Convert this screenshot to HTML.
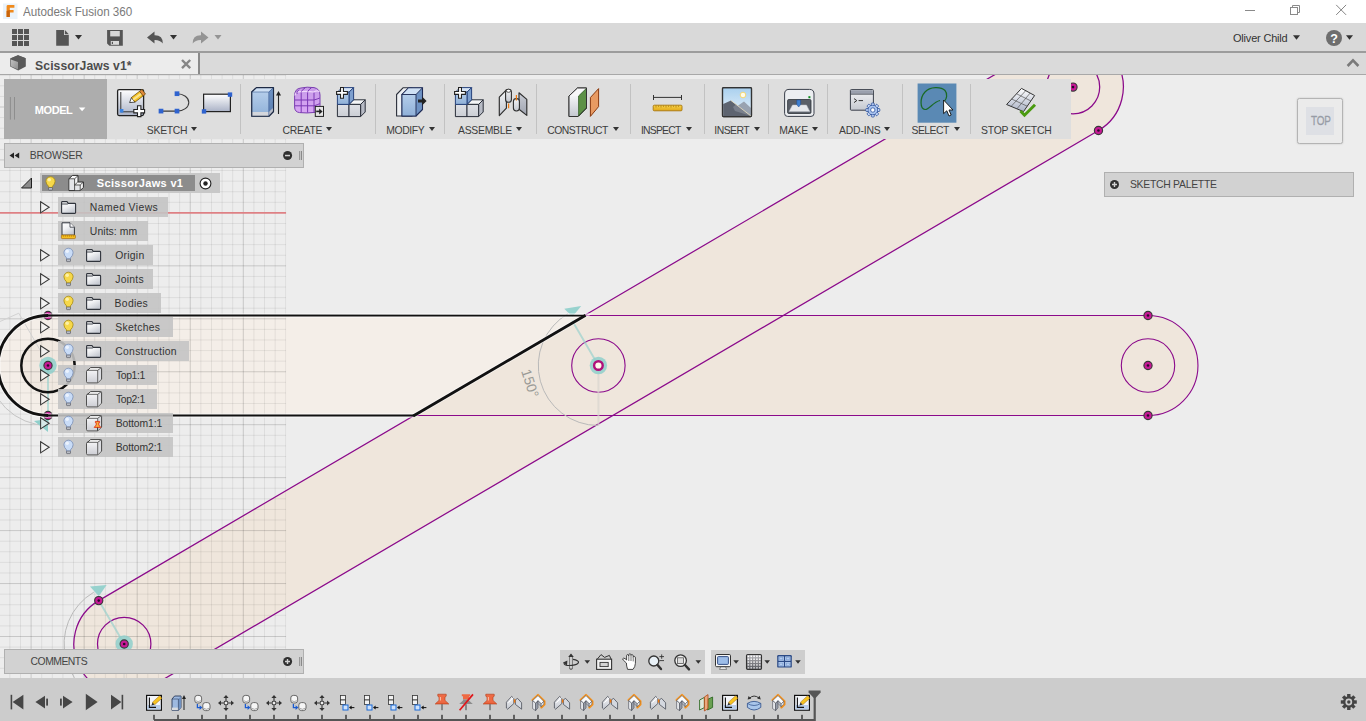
<!DOCTYPE html><html lang="en"><head><meta charset="utf-8"><title>Autodesk Fusion 360</title><style>
*{box-sizing:border-box;margin:0;padding:0}
html,body{width:1366px;height:721px;overflow:hidden;background:#ededed;font-family:"Liberation Sans",sans-serif;}
.abs{position:absolute}
#title{left:0;top:0;width:1366px;height:23px;background:#fff}
#title .t{left:23px;top:3px;font-size:13px;color:#7a7a7a;line-height:16px;white-space:nowrap}
#qat{left:0;top:23px;width:1366px;height:28px;background:#d9d9d9}
#qline{left:0;top:51px;width:1366px;height:2px;background:#9c9c9c}
#tabs{left:0;top:53px;width:1366px;height:21px;background:#dadada}
#tab{left:0;top:0;width:198px;height:21px;background:#ececec}
#tabr{left:198px;top:0;width:2px;height:21px;background:#8a8a8a}
#tabline{left:0;top:74px;width:1366px;height:1px;background:#a8a8a8}
#tab .t{left:35px;top:4px;font-size:12px;font-weight:bold;color:#4a4a4a;line-height:14px;white-space:nowrap;letter-spacing:-0.1px}
#user{left:1233px;top:8px;font-size:11px;color:#333;line-height:13px;white-space:nowrap}
#canvas{left:0;top:75px;width:1366px;height:603px;background:#ededed;overflow:hidden}
#tl{left:0;top:678px;width:1366px;height:43px;background:#cccccc}
#toolbar{left:4px;top:79px;width:1067px;height:60px;background:#dedede}
#model{left:0;top:0;width:103px;height:60px;background:#adadad}
#model .t{left:32px;top:24px;font-size:11px;font-weight:bold;color:#fff;line-height:13px;white-space:nowrap}
.lbl{top:45.3px;font-size:10.4px;color:#3c3c3c;line-height:12px;white-space:nowrap}
.sep{top:5px;width:1px;height:50px;background:#c2c2c2}
.dd{width:0;height:0;border-left:3px solid transparent;border-right:3px solid transparent;border-top:4px solid #333}
.panel{background:#d2d2d2;border:1px solid #b0b0b0;font-size:10.4px;color:#444;line-height:12px}
.row{height:19px;background:rgba(195,195,195,0.89);}
.row .t{top:3.5px;font-size:10.4px;color:#333;line-height:12px;white-space:nowrap}
.tx{white-space:nowrap}
</style></head><body>
<svg class="abs" style="left:0;top:0" width="1366" height="721" viewBox="0 0 1366 721">
<rect x="0" y="74" width="1366" height="604" fill="#ededed"/>
<defs><clipPath id="cv"><rect x="0" y="75" width="1366" height="603"/></clipPath><clipPath id="gridc"><rect x="0" y="75" width="286.3" height="603"/></clipPath><clipPath id="selc"><polygon points="-10,300 585,315.6 414,415.5 -10,430"/></clipPath></defs>
<g clip-path="url(#cv)">
<path d="M98.7,600.6 L1047.5,43.7 A50.3,50.3 0 0 1 1098.5,130.5 L149.7,687.4 A50.3,50.3 0 0 1 98.7,600.6 Z M48.0,315.5 L1148.0,315.5 A50.0,50.0 0 0 1 1148.0,415.5 L48.0,415.5 A50.0,50.0 0 0 1 48.0,315.5 Z" fill="#efe6dc" fill-rule="nonzero"/>
<g clip-path="url(#selc)"><path d="M48.0,315.5 L1148.0,315.5 A50.0,50.0 0 0 1 1148.0,415.5 L48.0,415.5 A50.0,50.0 0 0 1 48.0,315.5 Z" fill="#f4eee8"/><circle cx="48.0" cy="365.5" r="26.7" fill="#f0e8e0"/></g>
<g clip-path="url(#gridc)" shape-rendering="auto"><line x1="9.88" y1="75" x2="9.88" y2="678" stroke="#000" stroke-opacity="0.072" stroke-width="1"/><line x1="20.49" y1="75" x2="20.49" y2="678" stroke="#000" stroke-opacity="0.072" stroke-width="1"/><line x1="31.10" y1="75" x2="31.10" y2="678" stroke="#000" stroke-opacity="0.155" stroke-width="1"/><line x1="41.71" y1="75" x2="41.71" y2="678" stroke="#000" stroke-opacity="0.072" stroke-width="1"/><line x1="52.32" y1="75" x2="52.32" y2="678" stroke="#000" stroke-opacity="0.072" stroke-width="1"/><line x1="62.93" y1="75" x2="62.93" y2="678" stroke="#000" stroke-opacity="0.072" stroke-width="1"/><line x1="73.54" y1="75" x2="73.54" y2="678" stroke="#000" stroke-opacity="0.072" stroke-width="1"/><line x1="84.15" y1="75" x2="84.15" y2="678" stroke="#000" stroke-opacity="0.155" stroke-width="1"/><line x1="94.76" y1="75" x2="94.76" y2="678" stroke="#000" stroke-opacity="0.072" stroke-width="1"/><line x1="105.37" y1="75" x2="105.37" y2="678" stroke="#000" stroke-opacity="0.072" stroke-width="1"/><line x1="115.98" y1="75" x2="115.98" y2="678" stroke="#000" stroke-opacity="0.072" stroke-width="1"/><line x1="126.59" y1="75" x2="126.59" y2="678" stroke="#000" stroke-opacity="0.072" stroke-width="1"/><line x1="137.20" y1="75" x2="137.20" y2="678" stroke="#000" stroke-opacity="0.155" stroke-width="1"/><line x1="147.81" y1="75" x2="147.81" y2="678" stroke="#000" stroke-opacity="0.072" stroke-width="1"/><line x1="158.42" y1="75" x2="158.42" y2="678" stroke="#000" stroke-opacity="0.072" stroke-width="1"/><line x1="169.03" y1="75" x2="169.03" y2="678" stroke="#000" stroke-opacity="0.072" stroke-width="1"/><line x1="179.64" y1="75" x2="179.64" y2="678" stroke="#000" stroke-opacity="0.072" stroke-width="1"/><line x1="190.25" y1="75" x2="190.25" y2="678" stroke="#000" stroke-opacity="0.155" stroke-width="1"/><line x1="200.86" y1="75" x2="200.86" y2="678" stroke="#000" stroke-opacity="0.072" stroke-width="1"/><line x1="211.47" y1="75" x2="211.47" y2="678" stroke="#000" stroke-opacity="0.072" stroke-width="1"/><line x1="222.08" y1="75" x2="222.08" y2="678" stroke="#000" stroke-opacity="0.072" stroke-width="1"/><line x1="232.69" y1="75" x2="232.69" y2="678" stroke="#000" stroke-opacity="0.072" stroke-width="1"/><line x1="243.30" y1="75" x2="243.30" y2="678" stroke="#000" stroke-opacity="0.155" stroke-width="1"/><line x1="253.91" y1="75" x2="253.91" y2="678" stroke="#000" stroke-opacity="0.072" stroke-width="1"/><line x1="264.52" y1="75" x2="264.52" y2="678" stroke="#000" stroke-opacity="0.072" stroke-width="1"/><line x1="275.13" y1="75" x2="275.13" y2="678" stroke="#000" stroke-opacity="0.072" stroke-width="1"/><line x1="285.74" y1="75" x2="285.74" y2="678" stroke="#000" stroke-opacity="0.072" stroke-width="1"/><line x1="0" y1="75.23" x2="286.2" y2="75.23" stroke="#000" stroke-opacity="0.072" stroke-width="1"/><line x1="0" y1="85.82" x2="286.2" y2="85.82" stroke="#000" stroke-opacity="0.072" stroke-width="1"/><line x1="0" y1="96.41" x2="286.2" y2="96.41" stroke="#000" stroke-opacity="0.072" stroke-width="1"/><line x1="0" y1="107.00" x2="286.2" y2="107.00" stroke="#000" stroke-opacity="0.155" stroke-width="1"/><line x1="0" y1="117.59" x2="286.2" y2="117.59" stroke="#000" stroke-opacity="0.072" stroke-width="1"/><line x1="0" y1="128.18" x2="286.2" y2="128.18" stroke="#000" stroke-opacity="0.072" stroke-width="1"/><line x1="0" y1="138.77" x2="286.2" y2="138.77" stroke="#000" stroke-opacity="0.072" stroke-width="1"/><line x1="0" y1="149.36" x2="286.2" y2="149.36" stroke="#000" stroke-opacity="0.072" stroke-width="1"/><line x1="0" y1="159.95" x2="286.2" y2="159.95" stroke="#000" stroke-opacity="0.155" stroke-width="1"/><line x1="0" y1="170.54" x2="286.2" y2="170.54" stroke="#000" stroke-opacity="0.072" stroke-width="1"/><line x1="0" y1="181.13" x2="286.2" y2="181.13" stroke="#000" stroke-opacity="0.072" stroke-width="1"/><line x1="0" y1="191.72" x2="286.2" y2="191.72" stroke="#000" stroke-opacity="0.072" stroke-width="1"/><line x1="0" y1="202.31" x2="286.2" y2="202.31" stroke="#000" stroke-opacity="0.072" stroke-width="1"/><line x1="0" y1="212.90" x2="286.2" y2="212.90" stroke="#de8084" stroke-width="1.9"/><line x1="0" y1="223.49" x2="286.2" y2="223.49" stroke="#000" stroke-opacity="0.072" stroke-width="1"/><line x1="0" y1="234.08" x2="286.2" y2="234.08" stroke="#000" stroke-opacity="0.072" stroke-width="1"/><line x1="0" y1="244.67" x2="286.2" y2="244.67" stroke="#000" stroke-opacity="0.072" stroke-width="1"/><line x1="0" y1="255.26" x2="286.2" y2="255.26" stroke="#000" stroke-opacity="0.072" stroke-width="1"/><line x1="0" y1="265.85" x2="286.2" y2="265.85" stroke="#000" stroke-opacity="0.155" stroke-width="1"/><line x1="0" y1="276.44" x2="286.2" y2="276.44" stroke="#000" stroke-opacity="0.072" stroke-width="1"/><line x1="0" y1="287.03" x2="286.2" y2="287.03" stroke="#000" stroke-opacity="0.072" stroke-width="1"/><line x1="0" y1="297.62" x2="286.2" y2="297.62" stroke="#000" stroke-opacity="0.072" stroke-width="1"/><line x1="0" y1="308.21" x2="286.2" y2="308.21" stroke="#000" stroke-opacity="0.072" stroke-width="1"/><line x1="0" y1="318.80" x2="286.2" y2="318.80" stroke="#000" stroke-opacity="0.155" stroke-width="1"/><line x1="0" y1="329.39" x2="286.2" y2="329.39" stroke="#000" stroke-opacity="0.072" stroke-width="1"/><line x1="0" y1="339.98" x2="286.2" y2="339.98" stroke="#000" stroke-opacity="0.072" stroke-width="1"/><line x1="0" y1="350.57" x2="286.2" y2="350.57" stroke="#000" stroke-opacity="0.072" stroke-width="1"/><line x1="0" y1="361.16" x2="286.2" y2="361.16" stroke="#000" stroke-opacity="0.072" stroke-width="1"/><line x1="0" y1="371.75" x2="286.2" y2="371.75" stroke="#000" stroke-opacity="0.155" stroke-width="1"/><line x1="0" y1="382.34" x2="286.2" y2="382.34" stroke="#000" stroke-opacity="0.072" stroke-width="1"/><line x1="0" y1="392.93" x2="286.2" y2="392.93" stroke="#000" stroke-opacity="0.072" stroke-width="1"/><line x1="0" y1="403.52" x2="286.2" y2="403.52" stroke="#000" stroke-opacity="0.072" stroke-width="1"/><line x1="0" y1="414.11" x2="286.2" y2="414.11" stroke="#000" stroke-opacity="0.072" stroke-width="1"/><line x1="0" y1="424.70" x2="286.2" y2="424.70" stroke="#000" stroke-opacity="0.155" stroke-width="1"/><line x1="0" y1="435.29" x2="286.2" y2="435.29" stroke="#000" stroke-opacity="0.072" stroke-width="1"/><line x1="0" y1="445.88" x2="286.2" y2="445.88" stroke="#000" stroke-opacity="0.072" stroke-width="1"/><line x1="0" y1="456.47" x2="286.2" y2="456.47" stroke="#000" stroke-opacity="0.072" stroke-width="1"/><line x1="0" y1="467.06" x2="286.2" y2="467.06" stroke="#000" stroke-opacity="0.072" stroke-width="1"/><line x1="0" y1="477.65" x2="286.2" y2="477.65" stroke="#000" stroke-opacity="0.155" stroke-width="1"/><line x1="0" y1="488.24" x2="286.2" y2="488.24" stroke="#000" stroke-opacity="0.072" stroke-width="1"/><line x1="0" y1="498.83" x2="286.2" y2="498.83" stroke="#000" stroke-opacity="0.072" stroke-width="1"/><line x1="0" y1="509.42" x2="286.2" y2="509.42" stroke="#000" stroke-opacity="0.072" stroke-width="1"/><line x1="0" y1="520.01" x2="286.2" y2="520.01" stroke="#000" stroke-opacity="0.072" stroke-width="1"/><line x1="0" y1="530.60" x2="286.2" y2="530.60" stroke="#000" stroke-opacity="0.155" stroke-width="1"/><line x1="0" y1="541.19" x2="286.2" y2="541.19" stroke="#000" stroke-opacity="0.072" stroke-width="1"/><line x1="0" y1="551.78" x2="286.2" y2="551.78" stroke="#000" stroke-opacity="0.072" stroke-width="1"/><line x1="0" y1="562.37" x2="286.2" y2="562.37" stroke="#000" stroke-opacity="0.072" stroke-width="1"/><line x1="0" y1="572.96" x2="286.2" y2="572.96" stroke="#000" stroke-opacity="0.072" stroke-width="1"/><line x1="0" y1="583.55" x2="286.2" y2="583.55" stroke="#000" stroke-opacity="0.155" stroke-width="1"/><line x1="0" y1="594.14" x2="286.2" y2="594.14" stroke="#000" stroke-opacity="0.072" stroke-width="1"/><line x1="0" y1="604.73" x2="286.2" y2="604.73" stroke="#000" stroke-opacity="0.072" stroke-width="1"/><line x1="0" y1="615.32" x2="286.2" y2="615.32" stroke="#000" stroke-opacity="0.072" stroke-width="1"/><line x1="0" y1="625.91" x2="286.2" y2="625.91" stroke="#000" stroke-opacity="0.072" stroke-width="1"/><line x1="0" y1="636.50" x2="286.2" y2="636.50" stroke="#000" stroke-opacity="0.155" stroke-width="1"/><line x1="0" y1="647.09" x2="286.2" y2="647.09" stroke="#000" stroke-opacity="0.072" stroke-width="1"/><line x1="0" y1="657.68" x2="286.2" y2="657.68" stroke="#000" stroke-opacity="0.072" stroke-width="1"/><line x1="0" y1="668.27" x2="286.2" y2="668.27" stroke="#000" stroke-opacity="0.072" stroke-width="1"/></g>
<path d="M98.7,600.6 L1047.5,43.7 A50.3,50.3 0 0 1 1098.5,130.5 L149.7,687.4 A50.3,50.3 0 0 1 98.7,600.6 Z" fill="none" stroke="#8b0a8b" stroke-width="1.25"/>
<path d="M48.0,315.5 L1148.0,315.5 A50.0,50.0 0 0 1 1148.0,415.5 L48.0,415.5 A50.0,50.0 0 0 1 48.0,315.5 Z" fill="none" stroke="#8b0a8b" stroke-width="1.1"/>
<circle cx="124.2" cy="644.0" r="26.7" fill="none" stroke="#8b0a8b" stroke-width="1.25"/>
<circle cx="1073.0" cy="87.1" r="26.7" fill="none" stroke="#8b0a8b" stroke-width="1.25"/>
<circle cx="598.4" cy="365.5" r="26.7" fill="none" stroke="#8b0a8b" stroke-width="1.1"/>
<circle cx="1148.0" cy="365.5" r="26.7" fill="none" stroke="#8b0a8b" stroke-width="1.1"/>
<path d="M568.0,313.7 A60,60 0 0 0 598.4,425.5" fill="none" stroke="#b9b9b9" stroke-width="1"/><line x1="598.4" y1="365.5" x2="598.4" y2="425.5" stroke="#d8d4cf" stroke-opacity="0.7" stroke-width="2"/><line x1="598.4" y1="365.5" x2="572.1" y2="320.6" stroke="#8fcfcb" stroke-opacity="0.62" stroke-width="1.9"/>
<path d="M93.8,592.2 A60,60 0 0 0 124.2,704.0" fill="none" stroke="#b9b9b9" stroke-width="1"/><line x1="124.2" y1="644.0" x2="124.2" y2="704.0" stroke="#d8d4cf" stroke-opacity="0.7" stroke-width="2"/><line x1="124.2" y1="644.0" x2="97.9" y2="599.1" stroke="#8fcfcb" stroke-opacity="0.62" stroke-width="1.9"/>
<polygon points="564.3,308.8 581.2,306 572.4,316.8" fill="#8fcfcb" fill-opacity="0.92"/>
<polygon points="90,586.6 106.6,585 98.8,596.2" fill="#8fcfcb" fill-opacity="0.92"/>
<text x="0" y="0" transform="translate(521,371) rotate(72)" font-family="Liberation Sans, sans-serif" font-size="14" fill="#9a9a96">150°</text>
<path d="M0,306 A60,60 0 0 0 -12,365.5 A60,60 0 0 0 48,425.5" fill="none" stroke="#c4c4c4" stroke-width="1"/>
<line x1="48" y1="365.5" x2="48" y2="424" stroke="#8fcfcb" stroke-opacity="0.62" stroke-width="1.9"/>
<polygon points="34,421 48,419 48,432" fill="#8fcfcb"/>
<path d="M0,321.5 L18.8,313.2 L40,350" fill="none" stroke="#d2d2d2" stroke-width="1"/>
<circle cx="98.73825923963997" cy="600.6203992935364" r="4.1" fill="#c81896" stroke="#383838" stroke-width="1.15"/><circle cx="98.73825923963997" cy="600.6203992935364" r="1.3" fill="#2a0a2a"/>
<circle cx="1098.46174076036" cy="130.47960070646363" r="4.1" fill="#c81896" stroke="#383838" stroke-width="1.15"/><circle cx="1098.46174076036" cy="130.47960070646363" r="1.3" fill="#2a0a2a"/>
<circle cx="124.2" cy="644.0" r="8.7" fill="#8fcfcb" fill-opacity="0.85"/><circle cx="124.2" cy="644.0" r="4.1" fill="#c81896" stroke="#383838" stroke-width="1.15"/><circle cx="124.2" cy="644.0" r="1.3" fill="#2a0a2a"/>
<circle cx="1073.0" cy="87.1" r="4.1" fill="#c81896" stroke="#383838" stroke-width="1.15"/><circle cx="1073.0" cy="87.1" r="1.3" fill="#2a0a2a"/>
<circle cx="598.4" cy="365.5" r="8.7" fill="#8fcfcb" fill-opacity="0.85"/><circle cx="598.4" cy="365.5" r="4.3" fill="#fff6ea" stroke="#b0107a" stroke-width="2.4"/>
<circle cx="1148" cy="315.5" r="4.1" fill="#c81896" stroke="#383838" stroke-width="1.15"/><circle cx="1148" cy="315.5" r="1.3" fill="#2a0a2a"/>
<circle cx="1148" cy="365.5" r="4.1" fill="#c81896" stroke="#383838" stroke-width="1.15"/><circle cx="1148" cy="365.5" r="1.3" fill="#2a0a2a"/>
<circle cx="1148" cy="415.5" r="4.1" fill="#c81896" stroke="#383838" stroke-width="1.15"/><circle cx="1148" cy="415.5" r="1.3" fill="#2a0a2a"/>
<circle cx="48" cy="315.5" r="4.1" fill="#c81896" stroke="#383838" stroke-width="1.15"/><circle cx="48" cy="315.5" r="1.3" fill="#2a0a2a"/>
<circle cx="48" cy="415.5" r="4.1" fill="#c81896" stroke="#383838" stroke-width="1.15"/><circle cx="48" cy="415.5" r="1.3" fill="#2a0a2a"/>
<path d="M48.0,415.5 A50.0,50.0 0 0 1 48.0,315.5" fill="none" stroke="#fff" stroke-opacity="0.55" stroke-width="5"/><path d="M48.0,315.5 L585,315.6 L414,415.5 L48.0,415.5" fill="none" stroke="#fff" stroke-opacity="0.55" stroke-width="4.6"/><path d="M48.0,415.5 A50.0,50.0 0 0 1 48.0,315.5" fill="none" stroke="#111" stroke-width="2.8"/><path d="M47.0,315.5 L585,315.6 M414,415.5 L47.0,415.5" fill="none" stroke="#111" stroke-width="1.9"/><path d="M585.6,315.3 L413.2,415.9" fill="none" stroke="#111" stroke-width="2.9"/><circle cx="48.0" cy="365.5" r="26.7" fill="none" stroke="#111" stroke-width="2.5"/>
<circle cx="48" cy="365.5" r="8.7" fill="#8fcfcb" fill-opacity="0.85"/><circle cx="48" cy="365.5" r="4.1" fill="#c81896" stroke="#383838" stroke-width="1.15"/><circle cx="48" cy="365.5" r="1.3" fill="#2a0a2a"/>
</g></svg>
<div id="title" class="abs"></div>
<div id="qat" class="abs"></div>
<div id="qline" class="abs"></div>
<div id="tabs" class="abs"><div id="tab" class="abs"></div><div id="tabr" class="abs"></div></div>
<div id="tabline" class="abs"></div>
<div id="toolbar" class="abs"><div id="model" class="abs"></div>
<div class="abs sep" style="left:236px"></div>
<div class="abs sep" style="left:371px"></div>
<div class="abs sep" style="left:440px"></div>
<div class="abs sep" style="left:532px"></div>
<div class="abs sep" style="left:626px"></div>
<div class="abs sep" style="left:700px"></div>
<div class="abs sep" style="left:764px"></div>
<div class="abs sep" style="left:823px"></div>
<div class="abs sep" style="left:898px"></div>
<div class="abs sep" style="left:966px"></div>
<div class="abs dd" style="left:187.4px;top:48px"></div>
<div class="abs dd" style="left:322.4px;top:48px"></div>
<div class="abs dd" style="left:425.0px;top:48px"></div>
<div class="abs dd" style="left:512.0px;top:48px"></div>
<div class="abs dd" style="left:609.0px;top:48px"></div>
<div class="abs dd" style="left:682.0px;top:48px"></div>
<div class="abs dd" style="left:750.0px;top:48px"></div>
<div class="abs dd" style="left:808.0px;top:48px"></div>
<div class="abs dd" style="left:880.0px;top:48px"></div>
<div class="abs dd" style="left:950.0px;top:48px"></div>
</div>
<div class="abs panel" style="left:4px;top:143px;width:300px;height:25px"></div>
<div class="abs" style="left:40px;top:173px;width:180px;height:19.5px;background:#c8c8c8"></div>
<div class="abs" style="left:42px;top:175px;width:153px;height:15.6px;background:#8c8c8c"></div>
<div class="abs row" style="left:58px;top:197.2px;width:109.7px;height:19.4px"></div>
<div class="abs row" style="left:58px;top:221.2px;width:89.8px;height:19.4px"></div>
<div class="abs row" style="left:58px;top:245.2px;width:94.8px;height:19.4px"></div>
<div class="abs row" style="left:58px;top:269.2px;width:94.8px;height:19.4px"></div>
<div class="abs row" style="left:58px;top:293.2px;width:102.8px;height:19.4px"></div>
<div class="abs row" style="left:58px;top:317.2px;width:114.7px;height:19.4px"></div>
<div class="abs row" style="left:58px;top:341.2px;width:130.7px;height:19.4px"></div>
<div class="abs row" style="left:58px;top:365.2px;width:98.8px;height:19.4px"></div>
<div class="abs row" style="left:58px;top:389.2px;width:98.8px;height:19.4px"></div>
<div class="abs row" style="left:58px;top:413.2px;width:114.7px;height:19.4px"></div>
<div class="abs row" style="left:58px;top:437.2px;width:114.7px;height:19.4px"></div>
<div class="abs panel" style="left:4px;top:649px;width:300px;height:25px"></div>
<div class="abs panel" style="left:1104px;top:172px;width:250px;height:25px"></div>
<div class="abs" style="left:1297px;top:98px;width:46px;height:46px;background:#ebebeb;border:1px solid #b4b4b4;border-radius:2.5px;box-shadow:0 0 2px rgba(0,0,0,0.18)"></div>
<div class="abs" style="left:1305.8px;top:107px;width:28.4px;height:27.8px;background:#dee0e5"></div>
<div class="abs" style="left:560px;top:650px;width:145px;height:23.7px;background:#cecece"></div>
<div class="abs" style="left:711.3px;top:650px;width:93.8px;height:23.7px;background:#cecece"></div>
<div id="tl" class="abs"></div>
<span id="t_title" class="abs tx" style="left:23.00px;top:3.86px;font-size:12.8px;line-height:15px;letter-spacing:-0.010px;color:#7a7a7a;transform:scaleX(0.91);transform-origin:0 0">Autodesk Fusion 360</span>
<span id="t_tab" class="abs tx" style="left:35.10px;top:58.77px;font-size:12.2px;line-height:15px;letter-spacing:0.064px;font-weight:bold;color:#4c4c4c">ScissorJaws v1*</span>
<span id="t_user" class="abs tx" style="left:1232.98px;top:31.59px;font-size:11px;line-height:13px;letter-spacing:-0.196px;color:#333">Oliver Child</span>
<span id="t_model" class="abs tx" style="left:34.86px;top:103.89px;font-size:11px;line-height:13px;letter-spacing:-0.450px;font-weight:bold;color:#fff">MODEL</span>
<span id="t_browser" class="abs tx" style="left:29.72px;top:150.30px;font-size:10.4px;line-height:12px;letter-spacing:-0.090px;color:#444">BROWSER</span>
<span id="t_comments" class="abs tx" style="left:30.62px;top:656.30px;font-size:10.4px;line-height:12px;letter-spacing:-0.514px;color:#444">COMMENTS</span>
<span id="t_palette" class="abs tx" style="left:1129.90px;top:179.30px;font-size:10.4px;line-height:12px;letter-spacing:-0.263px;color:#444">SKETCH PALETTE</span>
<span id="t_top" class="abs tx" style="left:1310.98px;top:113.26px;font-size:13.4px;line-height:16px;letter-spacing:-0.270px;color:#979ca6;-webkit-text-stroke:0.3px #979ca6;transform:scaleX(0.74);transform-origin:0 0">TOP</span>
<span id="t_root" class="abs tx" style="left:96.86px;top:176.69px;font-size:11px;line-height:13px;letter-spacing:0.318px;font-weight:bold;color:#fff">ScissorJaws v1</span>
<span id="t_lbl_SKETCH" class="abs tx" style="left:146.86px;top:124.90px;font-size:10.4px;line-height:12px;letter-spacing:-0.288px;color:#3c3c3c">SKETCH</span>
<span id="t_lbl_CREATE" class="abs tx" style="left:282.62px;top:124.90px;font-size:10.4px;line-height:12px;letter-spacing:-0.324px;color:#3c3c3c">CREATE</span>
<span id="t_lbl_MODIFY" class="abs tx" style="left:386.36px;top:124.90px;font-size:10.4px;line-height:12px;letter-spacing:-0.432px;color:#3c3c3c">MODIFY</span>
<span id="t_lbl_ASSEMBLE" class="abs tx" style="left:458.00px;top:124.90px;font-size:10.4px;line-height:12px;letter-spacing:-0.257px;color:#3c3c3c">ASSEMBLE</span>
<span id="t_lbl_CONSTRUCT" class="abs tx" style="left:547.36px;top:124.90px;font-size:10.4px;line-height:12px;letter-spacing:-0.540px;color:#3c3c3c">CONSTRUCT</span>
<span id="t_lbl_INSPECT" class="abs tx" style="left:640.98px;top:124.90px;font-size:10.4px;line-height:12px;letter-spacing:-0.780px;color:#3c3c3c">INSPECT</span>
<span id="t_lbl_INSERT" class="abs tx" style="left:714.34px;top:124.90px;font-size:10.4px;line-height:12px;letter-spacing:-0.540px;color:#3c3c3c">INSERT</span>
<span id="t_lbl_MAKE" class="abs tx" style="left:779.24px;top:124.90px;font-size:10.4px;line-height:12px;letter-spacing:-0.180px;color:#3c3c3c">MAKE</span>
<span id="t_lbl_ADD-INS" class="abs tx" style="left:839.00px;top:124.90px;font-size:10.4px;line-height:12px;letter-spacing:-0.180px;color:#3c3c3c">ADD-INS</span>
<span id="t_lbl_SELECT" class="abs tx" style="left:911.60px;top:124.90px;font-size:10.4px;line-height:12px;letter-spacing:-0.540px;color:#3c3c3c">SELECT</span>
<span id="t_lbl_STOP_SKETCH" class="abs tx" style="left:981.12px;top:124.90px;font-size:10.4px;line-height:12px;letter-spacing:-0.234px;color:#3c3c3c">STOP SKETCH</span>
<span id="t_row0" class="abs tx" style="left:89.86px;top:202.40px;font-size:10.4px;line-height:12px;letter-spacing:0.396px;color:#333">Named Views</span>
<span id="t_row1" class="abs tx" style="left:89.86px;top:226.40px;font-size:10.4px;line-height:12px;letter-spacing:0.067px;color:#333">Units: mm</span>
<span id="t_row2" class="abs tx" style="left:115.24px;top:250.40px;font-size:10.4px;line-height:12px;letter-spacing:0.252px;color:#333">Origin</span>
<span id="t_row3" class="abs tx" style="left:115.24px;top:274.40px;font-size:10.4px;line-height:12px;letter-spacing:0.252px;color:#333">Joints</span>
<span id="t_row4" class="abs tx" style="left:114.62px;top:298.40px;font-size:10.4px;line-height:12px;letter-spacing:0.288px;color:#333">Bodies</span>
<span id="t_row5" class="abs tx" style="left:115.24px;top:322.40px;font-size:10.4px;line-height:12px;letter-spacing:0.283px;color:#333">Sketches</span>
<span id="t_row6" class="abs tx" style="left:115.24px;top:346.40px;font-size:10.4px;line-height:12px;letter-spacing:0.278px;color:#333">Construction</span>
<span id="t_row7" class="abs tx" style="left:116.02px;top:370.40px;font-size:10.4px;line-height:12px;letter-spacing:-0.396px;color:#333">Top1:1</span>
<span id="t_row8" class="abs tx" style="left:116.02px;top:394.40px;font-size:10.4px;line-height:12px;letter-spacing:-0.396px;color:#333">Top2:1</span>
<span id="t_row9" class="abs tx" style="left:115.74px;top:418.40px;font-size:10.4px;line-height:12px;letter-spacing:-0.090px;color:#333">Bottom1:1</span>
<span id="t_row10" class="abs tx" style="left:115.74px;top:442.40px;font-size:10.4px;line-height:12px;letter-spacing:-0.090px;color:#333">Bottom2:1</span>
<svg class="abs" style="left:0;top:0;pointer-events:none" width="1366" height="721" viewBox="0 0 1366 721">
<defs>
<linearGradient id="gW" x1="0" y1="0" x2="0" y2="1"><stop offset="0" stop-color="#ffffff"/><stop offset="1" stop-color="#aab2c6"/></linearGradient>
<linearGradient id="gB" x1="0" y1="0" x2="0" y2="1"><stop offset="0" stop-color="#b4cdea"/><stop offset="1" stop-color="#8fb0d8"/></linearGradient>
<linearGradient id="gBs" x1="0" y1="0" x2="0" y2="1"><stop offset="0" stop-color="#6f93c4"/><stop offset="1" stop-color="#5b7eb0"/></linearGradient>
<linearGradient id="gG" x1="0" y1="0" x2="0" y2="1"><stop offset="0" stop-color="#f4f5f7"/><stop offset="1" stop-color="#c4c8d0"/></linearGradient>
<linearGradient id="gGs" x1="0" y1="0" x2="0" y2="1"><stop offset="0" stop-color="#c9ccd4"/><stop offset="1" stop-color="#9fa4b0"/></linearGradient>
<linearGradient id="gP" x1="0" y1="0" x2="0" y2="1"><stop offset="0" stop-color="#c79be8"/><stop offset="1" stop-color="#d9a6f4"/></linearGradient>
<linearGradient id="gSky" x1="0" y1="0" x2="0" y2="1"><stop offset="0" stop-color="#a9d0ee"/><stop offset="1" stop-color="#e8f2fa"/></linearGradient>
<linearGradient id="gY" x1="0" y1="0" x2="0" y2="1"><stop offset="0" stop-color="#f7d34a"/><stop offset="1" stop-color="#e2a818"/></linearGradient>
<linearGradient id="gCube" x1="0" y1="0" x2="0" y2="1"><stop offset="0" stop-color="#f2f2f4"/><stop offset="1" stop-color="#cfd0d6"/></linearGradient>
<linearGradient id="gG2" x1="0" y1="0" x2="0" y2="1"><stop offset="0" stop-color="#dfe1e6"/><stop offset="1" stop-color="#cbced5"/></linearGradient>
<linearGradient id="gFold" x1="0" y1="0" x2="0.6" y2="1"><stop offset="0" stop-color="#ffffff"/><stop offset="0.45" stop-color="#f2f3f5"/><stop offset="1" stop-color="#c6cad2"/></linearGradient>
<linearGradient id="gTabCube" x1="0" y1="0" x2="1" y2="1"><stop offset="0" stop-color="#c2c2c2"/><stop offset="1" stop-color="#8e8e8e"/></linearGradient>
<linearGradient id="gGridIc" x1="0" y1="0" x2="0" y2="1"><stop offset="0" stop-color="#b8b8bc"/><stop offset="1" stop-color="#55565c"/></linearGradient>
</defs>
<rect x="3" y="3.5" width="14.5" height="15.5" fill="#eaf3fb"/>
<path d="M6.6,17 V6.2 Q6.6,5 8,5 H14.4 V7.8 H9.8 V10 H13.6 V12.6 H9.8 V17 Z" fill="#f08a1c"/><path d="M6.6,17 V11 L9.8,10 V17 Z" fill="#c8640c"/>
<path d="M1245,10.5 H1255" stroke="#8a8a8a" stroke-width="1"/>
<rect x="1290.5" y="7.5" width="7" height="7" fill="none" stroke="#8a8a8a" stroke-width="1"/><path d="M1292.5,7.5 V5.5 H1299.5 V12.5 H1297.5" fill="none" stroke="#8a8a8a" stroke-width="1"/>
<path d="M1336.2,4.9 L1346.1,14.9 M1346.1,4.9 L1336.2,14.9" stroke="#777" stroke-width="0.9"/>
<rect x="12" y="29" width="5" height="5" fill="#555"/>
<rect x="12" y="35" width="5" height="5" fill="#555"/>
<rect x="12" y="41" width="5" height="5" fill="#555"/>
<rect x="18" y="29" width="5" height="5" fill="#555"/>
<rect x="18" y="35" width="5" height="5" fill="#555"/>
<rect x="18" y="41" width="5" height="5" fill="#555"/>
<rect x="24" y="29" width="5" height="5" fill="#555"/>
<rect x="24" y="35" width="5" height="5" fill="#555"/>
<rect x="24" y="41" width="5" height="5" fill="#555"/>
<path d="M56.2,30.1 H64 V35 H68.8 V45.8 H56.2 Z" fill="#555"/><path d="M64.9,30.1 L68.8,34.2 H64.9 Z" fill="#555"/>
<polygon points="75,35 82,35 78.5,39.5" fill="#333"/>
<path d="M107.1,30.1 H122.8 V45.8 H109.4 L107.1,43.4 Z" fill="#555"/><rect x="110.2" y="31" width="9.6" height="5.4" fill="#d9d9d9"/><rect x="110.8" y="41" width="8.2" height="3.8" fill="#d9d9d9"/><rect x="111.8" y="41.8" width="1.2" height="2.2" fill="#555"/>
<path d="M147,37.5 L154.5,31.5 V35.2 Q163,35 162.8,43.5 Q160,39.8 154.5,40 V43.5 Z" fill="#555"/>
<polygon points="170,35 177,35 173.5,39.5" fill="#333"/>
<path d="M208.5,37.5 L201,31.5 V35.2 Q192.5,35 192.7,43.5 Q195.5,39.8 201,40 V43.5 Z" fill="#949494"/>
<polygon points="214.5,35 221.5,35 218,39.5" fill="#949494"/>
<polygon points="1293,35.2 1300,35.2 1296.5,39.8" fill="#333"/>
<circle cx="1334" cy="38" r="8" fill="#6e6e6e"/>
<text x="1334" y="42.6" text-anchor="middle" font-family="Liberation Sans, sans-serif" font-weight="bold" font-size="12.5" fill="#ffffff">?</text>
<polygon points="1346,35.2 1353,35.2 1349.5,39.8" fill="#333"/>
<polygon points="10.2,58.4 18,55.2 25.8,58.2 25.8,66.4 18.2,70.5 10.2,66.6" fill="#5a5a5a"/><polygon points="10.2,58.4 18,55.2 25.8,58.2 18.2,61.2" fill="#5c5c5c"/><polygon points="10.8,59.4 18,62 18,69.6 10.8,66.2" fill="url(#gTabCube)"/>
<path d="M182,60 L190.2,68.2 M190.2,60 L182,68.2" stroke="#868686" stroke-width="2.4"/>
<path d="M1347.6,66 L1353,60.4 L1358.4,66" fill="none" stroke="#7a7a7a" stroke-width="2.6"/>
<path d="M10.4,97 V119.6 M14.5,97 V119.6" stroke="#8a8a8a" stroke-width="0.9"/><polygon points="78.8,107.4 85.4,107.4 82.1,111.2" fill="#fff"/>
<rect x="117.6" y="89.6" width="26" height="26" rx="1.5" fill="url(#gW)" stroke="#222" stroke-width="1.3"/>
<path d="M120.8,92 V111.8 H134" fill="none" stroke="#333" stroke-width="1"/>
<rect x="119.8" y="109" width="3.6" height="3.6" fill="#3b82e0"/>
<g transform="translate(129.6,102.6) rotate(-37.5)"><polygon points="0,0 4.6,-2.9 4.6,2.9" fill="#fff" stroke="#333" stroke-width="0.8" stroke-linejoin="round"/><rect x="4.6" y="-2.9" width="10.2" height="5.8" fill="#f6c322" stroke="#6a4a10" stroke-width="0.7"/><rect x="4.6" y="-1.2" width="10.2" height="2.2" fill="#fbe38a"/><rect x="14.8" y="-2.9" width="3" height="5.8" fill="#e0883a" stroke="#6a4a10" stroke-width="0.7"/></g>
<path d="M137.5,105.8 h3.4 v3.7 h3.7 v3.4 h-3.7 v3.7 h-3.4 v-3.7 h-3.7 v-3.4 h3.7 Z" fill="#fff" stroke="#222" stroke-width="1.1" stroke-linejoin="miter"/>
<path d="M161,111.1 H177 A11.8,8.7 0 0 0 177,93.7" fill="none" stroke="#3a3a3a" stroke-width="1.05"/>
<rect x="158.65" y="108.75" width="4.7" height="4.7" fill="#2f63cf"/><rect x="174.65" y="108.75" width="4.7" height="4.7" fill="#2f63cf"/><rect x="174.65" y="91.35000000000001" width="4.7" height="4.7" fill="#2f63cf"/>
<rect x="203.6" y="94.2" width="26.8" height="17.4" fill="url(#gW)" stroke="#222" stroke-width="1.2"/>
<rect x="201.8" y="109.2" width="4.4" height="4.4" fill="#2f63cf"/><rect x="227.8" y="92.39999999999999" width="4.4" height="4.4" fill="#2f63cf"/>
<polygon points="251.8,92 256.5,87.6 273.5,87.6 273.5,111.5 268.8,116.3 251.8,116.3" fill="#5b7eb0" stroke="#1e2a44" stroke-width="1.1" stroke-linejoin="round"/>
<polygon points="251.8,92 256.5,87.6 273.5,87.6 268.8,92" fill="#cfe0f4"/>
<polygon points="268.8,92 273.5,87.6 273.5,111.5 268.8,116.3" fill="url(#gBs)"/>
<rect x="251.8" y="92" width="17" height="24.3" fill="url(#gB)"/>
<rect x="251.8" y="112" width="17" height="4.3" fill="#d4d7dd"/><polygon points="268.8,112 273.5,107.4 273.5,111.5 268.8,116.3" fill="#b9bdc8"/>
<polygon points="251.8,92 256.5,87.6 273.5,87.6 273.5,111.5 268.8,116.3 251.8,116.3" fill="none" stroke="#1e2a44" stroke-width="1.1" stroke-linejoin="round"/>
<path d="M268.8,92 V116.3 M268.8,92 L273.5,87.6 M251.8,92 H268.8" fill="none" stroke="#3a5a92" stroke-width="0.6"/>
<path d="M278.5,114 V93" stroke="#222" stroke-width="1.1"/><polygon points="276,95.5 278.5,91 281,95.5" fill="#222"/>
<path d="M294.6,96 Q294.6,88.4 301,88 Q307,86.6 314,87.6 Q319.8,88.6 320,95 V105.5 Q320,111 315,112.4 Q307,113.4 299.6,112.6 Q294.6,112 294.6,107 Z" fill="url(#gP)" stroke="#7a3fb0" stroke-width="1"/>
<path d="M295,95.5 Q295.5,92 300,91.6 Q308,91 313.6,92 Q318,89.6 319.4,92" fill="none" stroke="#f0d8fc" stroke-width="1.2"/>
<path d="M295,100 H314 M295,105.8 H314 M301.2,92.4 V112.6 M307.6,92.4 V112.6 M314,92.6 V112.2 M314,100 Q317.4,99 319.8,98 M314,105.8 Q317.4,104.8 319.8,103.6 M301.4,91.6 Q302.4,89.4 305,88 M307.8,91.6 Q308.8,89.4 311.4,87.8 M297,94 Q296,92 299,89.6" fill="none" stroke="#7a38b4" stroke-width="1"/>
<rect x="315.3" y="106.4" width="8.2" height="10" fill="#e6e6e6" stroke="#222" stroke-width="1"/>
<path d="M316.2,111.4 H320" stroke="#222" stroke-width="1.6"/><polygon points="319.2,108.4 322.6,111.4 319.2,114.4" fill="#222"/>
<polygon points="337.4,104.39999999999999 342.0,99.8 353.6,99.8 349.0,104.39999999999999" fill="#f2f3f5" stroke="#2a2f3a" stroke-width="1" stroke-linejoin="round"/><polygon points="349.0,104.39999999999999 353.6,99.8 353.6,112.0 349.0,116.6" fill="#b4b8c2" stroke="#2a2f3a" stroke-width="1" stroke-linejoin="round"/><rect x="337.4" y="104.39999999999999" width="11.6" height="12.2" fill="url(#gG2)" stroke="#2a2f3a" stroke-width="1" stroke-linejoin="round"/><polygon points="349.0,104.39999999999999 353.6,99.8 365.20000000000005,99.8 360.6,104.39999999999999" fill="#f4f5f7" stroke="#2a2f3a" stroke-width="1" stroke-linejoin="round"/><polygon points="360.6,104.39999999999999 365.20000000000005,99.8 365.20000000000005,112.0 360.6,116.6" fill="#b8bcc6" stroke="#2a2f3a" stroke-width="1" stroke-linejoin="round"/><rect x="349.0" y="104.39999999999999" width="11.6" height="12.2" fill="url(#gG2)" stroke="#2a2f3a" stroke-width="1" stroke-linejoin="round"/><polygon points="337.4,92.19999999999999 342.0,87.6 353.6,87.6 349.0,92.19999999999999" fill="#d6e4f5" stroke="#27437c" stroke-width="1" stroke-linejoin="round"/><polygon points="349.0,92.19999999999999 353.6,87.6 353.6,99.8 349.0,104.39999999999999" fill="#7d9fce" stroke="#27437c" stroke-width="1" stroke-linejoin="round"/><rect x="337.4" y="92.19999999999999" width="11.6" height="12.2" fill="url(#gB)" stroke="#27437c" stroke-width="1" stroke-linejoin="round"/><path d="M340.55,87.5 h2.9 v3.95 h3.95 v2.9 h-3.95 v3.95 h-2.9 v-3.95 h-3.95 v-2.9 h3.95 Z" fill="#fff" stroke="#222" stroke-width="1.1" stroke-linejoin="miter"/>
<polygon points="396.6,94.5 403,87.8 412,87.8 412,116 396.6,116" fill="#eef0f3" stroke="#2a2f3a" stroke-width="1.1" stroke-linejoin="round"/>
<polygon points="402,94.5 408.5,87.8 422.5,87.8 422.5,109.5 416,116 402,116" fill="#6f93c4" stroke="#1e2a55" stroke-width="1.1" stroke-linejoin="round"/>
<rect x="402" y="94.5" width="14" height="21.5" fill="url(#gB)" stroke="#1e2a55" stroke-width="0.9"/>
<polygon points="402,94.5 408.5,87.8 422.5,87.8 416,94.5" fill="#cfe0f4" stroke="#1e2a55" stroke-width="0.9" stroke-linejoin="round"/>
<path d="M418,101 H423" stroke="#222" stroke-width="3"/><polygon points="422,96.6 426.6,101 422,105.4" fill="#222"/>
<polygon points="455.4,104.39999999999999 460.0,99.8 471.6,99.8 467.0,104.39999999999999" fill="#f2f3f5" stroke="#2a2f3a" stroke-width="1" stroke-linejoin="round"/><polygon points="467.0,104.39999999999999 471.6,99.8 471.6,112.0 467.0,116.6" fill="#b4b8c2" stroke="#2a2f3a" stroke-width="1" stroke-linejoin="round"/><rect x="455.4" y="104.39999999999999" width="11.6" height="12.2" fill="url(#gG2)" stroke="#2a2f3a" stroke-width="1" stroke-linejoin="round"/><polygon points="467.0,104.39999999999999 471.6,99.8 483.20000000000005,99.8 478.6,104.39999999999999" fill="#f4f5f7" stroke="#2a2f3a" stroke-width="1" stroke-linejoin="round"/><polygon points="478.6,104.39999999999999 483.20000000000005,99.8 483.20000000000005,112.0 478.6,116.6" fill="#b8bcc6" stroke="#2a2f3a" stroke-width="1" stroke-linejoin="round"/><rect x="467.0" y="104.39999999999999" width="11.6" height="12.2" fill="url(#gG2)" stroke="#2a2f3a" stroke-width="1" stroke-linejoin="round"/><polygon points="455.4,92.19999999999999 460.0,87.6 471.6,87.6 467.0,92.19999999999999" fill="#d6e4f5" stroke="#27437c" stroke-width="1" stroke-linejoin="round"/><polygon points="467.0,92.19999999999999 471.6,87.6 471.6,99.8 467.0,104.39999999999999" fill="#7d9fce" stroke="#27437c" stroke-width="1" stroke-linejoin="round"/><rect x="455.4" y="92.19999999999999" width="11.6" height="12.2" fill="url(#gB)" stroke="#27437c" stroke-width="1" stroke-linejoin="round"/><path d="M458.55,87.5 h2.9 v3.95 h3.95 v2.9 h-3.95 v3.95 h-2.9 v-3.95 h-3.95 v-2.9 h3.95 Z" fill="#fff" stroke="#222" stroke-width="1.1" stroke-linejoin="miter"/>
<polygon points="499.3,97.2 506.4,89.8 506.4,108.2 499.3,115.6" fill="url(#gG)" stroke="#2e2e2e" stroke-width="1.15" stroke-linejoin="round"/>
<rect x="505.6" y="89.2" width="5.8" height="13" rx="2.8" fill="url(#gG)" stroke="#2e2e2e" stroke-width="1.1"/><ellipse cx="508.5" cy="90.8" rx="2.2" ry="1.5" fill="#fff" stroke="#2e2e2e" stroke-width="0.8"/>
<polygon points="519,92.8 526.8,99.4 526.8,115.4 519,109.2" fill="url(#gGs)" stroke="#2e2e2e" stroke-width="1.15" stroke-linejoin="round"/>
<rect x="513.4" y="98.6" width="6" height="12.4" rx="2.9" fill="url(#gG)" stroke="#2e2e2e" stroke-width="1.1"/>
<path d="M508.6,103.4 V108.2 M516.4,95 V100.4" stroke="#f07a10" stroke-width="1.2"/>
<polygon points="569,96 577.5,88 586.5,88 586.5,108 578,116.5 569,116.5" fill="#e9ebee" stroke="#333" stroke-width="1" stroke-linejoin="round"/>
<polygon points="569,96 577.5,88 586.5,88 578,96" fill="#f8f8f9"/><rect x="569" y="96" width="9" height="20.5" fill="url(#gG)"/>
<polygon points="578.6,96 586.5,88.3 586.5,108 578.6,116.2" fill="#5d9146" stroke="#2f5a25" stroke-width="0.8" stroke-linejoin="round"/>
<polygon points="569,96 577.5,88 586.5,88 586.5,108 578,116.5 569,116.5" fill="none" stroke="#333" stroke-width="1" stroke-linejoin="round"/>
<polygon points="590.4,97.5 598.6,88.6 598.6,106.6 590.4,116.4" fill="#e89a62" stroke="#8a3a10" stroke-width="1" stroke-linejoin="round"/>
<path d="M653.5,97.4 H681.5 M653.5,95 V100 M681.5,95 V100" stroke="#333" stroke-width="1" fill="none"/>
<rect x="653.2" y="105.2" width="28.8" height="5.6" rx="1" fill="url(#gY)" stroke="#a8760c" stroke-width="0.9"/>
<path d="M656,105.5 v2 M658.5,105.5 v1.4 M661,105.5 v2 M663.5,105.5 v1.4 M666,105.5 v2 M668.5,105.5 v1.4 M671,105.5 v2 M673.5,105.5 v1.4 M676,105.5 v2 M678.5,105.5 v1.4" stroke="#a8760c" stroke-width="0.7"/>
<rect x="722.5" y="87.6" width="29" height="29" rx="1" fill="url(#gSky)" stroke="#333" stroke-width="1.2"/>
<polygon points="736,107 744,101.5 751,108 751,116 736,116" fill="#98a2b0"/>
<polygon points="723.2,104 731,100.5 751,116 723.2,116" fill="#5e6470"/><polygon points="731,100.5 736,104.5 733,107 735,111 751,116" fill="#7a808c"/>
<path d="M731,100.5 L751,116" stroke="#f3e9c8" stroke-width="0.8"/>
<circle cx="743" cy="95" r="2.8" fill="#fffbe8" stroke="#f3d774" stroke-width="1"/>
<rect x="722.5" y="87.6" width="29" height="29" rx="1" fill="none" stroke="#333" stroke-width="1.2"/>
<path d="M784.6,94 Q784.6,89.4 789,89.4 H809.5 Q814,89.4 814,94 V113.5 Q814,116.4 811,116.4 H787.6 Q784.6,116.4 784.6,113.5 Z" fill="#eceef1" stroke="#3a3f4a" stroke-width="1"/>
<rect x="787.6" y="99.5" width="23.4" height="14" rx="1.2" fill="#5a5f68" stroke="#2f333a" stroke-width="0.8"/>
<polygon points="792.5,105 806.5,105 809.8,111.5 789,111.5" fill="#e6e8ec" stroke="#b8bcc4" stroke-width="0.5"/>
<polygon points="796.8,100 800.6,100 800.6,104.5 798.7,107 796.8,104.5" fill="#3f7fd0" stroke="#1e4a90" stroke-width="0.5"/>
<rect x="808.4" y="96.2" width="2" height="2" fill="#0a8a1a"/>
<rect x="850.4" y="89.6" width="23" height="20.6" rx="0.8" fill="url(#gG)" stroke="#3a3f4a" stroke-width="1"/>
<rect x="851" y="90.2" width="21.8" height="3.6" fill="#9aa0ae"/><path d="M850.4,94.2 H873.4" stroke="#3a3f4a" stroke-width="0.8"/>
<path d="M854,98.6 L856.8,100.6 L854,102.6 M858.6,100.6 H863" fill="none" stroke="#333" stroke-width="1"/>
<g transform="translate(872.8,110)"><rect x="-1.5" y="-7" width="3" height="4" rx="0.8" fill="#c4d6f6" stroke="#2a4f9c" stroke-width="0.8" transform="rotate(0)"/><rect x="-1.5" y="-7" width="3" height="4" rx="0.8" fill="#c4d6f6" stroke="#2a4f9c" stroke-width="0.8" transform="rotate(45)"/><rect x="-1.5" y="-7" width="3" height="4" rx="0.8" fill="#c4d6f6" stroke="#2a4f9c" stroke-width="0.8" transform="rotate(90)"/><rect x="-1.5" y="-7" width="3" height="4" rx="0.8" fill="#c4d6f6" stroke="#2a4f9c" stroke-width="0.8" transform="rotate(135)"/><rect x="-1.5" y="-7" width="3" height="4" rx="0.8" fill="#c4d6f6" stroke="#2a4f9c" stroke-width="0.8" transform="rotate(180)"/><rect x="-1.5" y="-7" width="3" height="4" rx="0.8" fill="#c4d6f6" stroke="#2a4f9c" stroke-width="0.8" transform="rotate(225)"/><rect x="-1.5" y="-7" width="3" height="4" rx="0.8" fill="#c4d6f6" stroke="#2a4f9c" stroke-width="0.8" transform="rotate(270)"/><rect x="-1.5" y="-7" width="3" height="4" rx="0.8" fill="#c4d6f6" stroke="#2a4f9c" stroke-width="0.8" transform="rotate(315)"/><circle r="4.7" fill="#c4d6f6" stroke="#2a4f9c" stroke-width="0.8"/><circle r="4.1" fill="#a9c4f0"/><circle r="2.2" fill="#fff" stroke="#2a4f9c" stroke-width="0.8"/></g>
<rect x="917.6" y="83.5" width="38.8" height="39.2" fill="#5a89b4"/>
<path d="M940,100.5 C933,102 929,110 925,109.5 C920,109 919.5,98 925,92 C930,86.5 941,86.5 945,90.5 C948,94 946.5,99 944.5,101" fill="none" stroke="#1a6a24" stroke-width="1.2"/>
<polygon points="943.6,100 943.6,113.6 946.8,110.8 949,116 951.2,115 949,110 953,110" fill="#fff" stroke="#111" stroke-width="0.9" stroke-linejoin="round"/>
<polygon points="1006.6,104.5 1021.5,88.4 1034.6,95.5 1023.5,111.6" fill="url(#gW)" stroke="#333" stroke-width="1" stroke-linejoin="round"/>
<path d="M1011.6,99 L1027.2,106.2 M1016.6,93.8 L1031,101 M1011,106.5 L1025.8,90.6 M1016.8,109 L1030.2,93" stroke="#555" stroke-width="0.7" fill="none"/>
<path d="M1020.5,111 L1024.5,115.2 L1035,104.8" fill="none" stroke="#4a9a10" stroke-width="3"/>
<polygon points="9.5,155.5 14,152.6 14,158.4" fill="#222"/><polygon points="14.6,155.5 19.2,152.6 19.2,158.4" fill="#222"/>
<circle cx="287.6" cy="155.5" r="4.5" fill="#303030"/><rect x="285" y="154.8" width="5" height="1.5" fill="#d2d2d2"/>
<path d="M299.7,151 V160 M301.5,151 V160" stroke="#777" stroke-width="0.8"/>
<polygon points="21.5,188 31.5,188 31.5,178" fill="#8a8a8a" stroke="#222" stroke-width="1"/>
<path d="M45.9,181.3 A4.6,4.6 0 1 1 55.1,181.3 Q54.800000000000004,184.3 52.5,186.3 V187.70000000000002 H48.5 V186.3 Q46.199999999999996,184.3 45.9,181.3 Z" fill="#f6d84a" stroke="#a88a10" stroke-width="0.8"/><circle cx="49.2" cy="179.8" r="1.8" fill="#fdf3b0" opacity="0.9"/><rect x="48.5" y="187.5" width="4" height="2.6" rx="0.6" fill="#b8bcc6" stroke="#4a4e58" stroke-width="0.6"/>
<path d="M69,178.8 L72.4,175.4 H78 V182 H83.4 V187.4 L80.2,190.6 H69 Z" fill="#f6f6f7" stroke="#2e2e2e" stroke-width="1" stroke-linejoin="round"/><rect x="69.6" y="179.2" width="4.8" height="10.8" fill="#e4e5e9"/><rect x="74.8" y="185.6" width="5" height="4.6" fill="#e4e5e9"/><path d="M69,178.8 H74.6 V190.4 M74.6,178.8 L78,175.6 M74.6,185 H80.2 V190.4 M80.2,185 L83.2,182.2 M74.6,185 L77.8,182" fill="none" stroke="#2e2e2e" stroke-width="0.8"/>
<circle cx="205.5" cy="183.5" r="5.4" fill="#fff" stroke="#222" stroke-width="1.1"/><circle cx="205.5" cy="183.5" r="2.2" fill="#222"/>
<polygon points="40.6,201.70000000000002 49.2,207.3 40.6,212.9" fill="#f4f4f4" fill-opacity="0.7" stroke="#383838" stroke-width="1.05" stroke-linejoin="miter"/>
<path d="M61.6,202.4 Q61.6,201.60000000000002 62.4,201.60000000000002 H67 L68.2,203.4 H74.8 Q75.6,203.4 75.6,204.20000000000002 V212.60000000000002 Q75.6,213.4 74.8,213.4 H62.4 Q61.6,213.4 61.6,212.60000000000002 Z" fill="url(#gFold)" stroke="#30343c" stroke-width="1.1" stroke-linejoin="round"/><path d="M61.8,204.0 H67.8" stroke="#30343c" stroke-width="0.9"/>
<path d="M62,222.8 H70 L74.4,227.2 V235.2 H62 Z" fill="url(#gFold)" stroke="#30343c" stroke-width="1" stroke-linejoin="round"/><path d="M70,222.8 V227.2 H74.4" fill="#fff" stroke="#30343c" stroke-width="0.8"/><rect x="61.4" y="235" width="14" height="3.6" rx="0.8" fill="#f6c020" stroke="#a86c08" stroke-width="0.7"/><path d="M63.4,235.2 v1.6 M65.4,235.2 v1.6 M67.4,235.2 v1.6 M69.4,235.2 v1.6 M71.4,235.2 v1.6 M73.4,235.2 v1.6" stroke="#a86c08" stroke-width="0.6"/>
<polygon points="40.6,249.70000000000002 49.2,255.3 40.6,260.90000000000003" fill="#f4f4f4" fill-opacity="0.7" stroke="#383838" stroke-width="1.05" stroke-linejoin="miter"/>
<path d="M63.9,252.8 A4.6,4.6 0 1 1 73.1,252.8 Q72.8,255.8 70.5,257.8 V259.2 H66.5 V257.8 Q64.2,255.8 63.9,252.8 Z" fill="#c9dcf7" stroke="#7a8fb8" stroke-width="0.8"/><circle cx="67.2" cy="251.3" r="1.8" fill="#eef4fd" opacity="0.9"/><rect x="66.5" y="259.0" width="4" height="2.6" rx="0.6" fill="#b8bcc6" stroke="#4a4e58" stroke-width="0.6"/>
<path d="M86.6,250.4 Q86.6,249.60000000000002 87.4,249.60000000000002 H92 L93.2,251.4 H99.8 Q100.6,251.4 100.6,252.20000000000002 V260.6 Q100.6,261.40000000000003 99.8,261.40000000000003 H87.4 Q86.6,261.40000000000003 86.6,260.6 Z" fill="url(#gFold)" stroke="#30343c" stroke-width="1.1" stroke-linejoin="round"/><path d="M86.8,252.0 H92.8" stroke="#30343c" stroke-width="0.9"/>
<polygon points="40.6,273.7 49.2,279.3 40.6,284.90000000000003" fill="#f4f4f4" fill-opacity="0.7" stroke="#383838" stroke-width="1.05" stroke-linejoin="miter"/>
<path d="M63.9,276.8 A4.6,4.6 0 1 1 73.1,276.8 Q72.8,279.8 70.5,281.8 V283.2 H66.5 V281.8 Q64.2,279.8 63.9,276.8 Z" fill="#f6d84a" stroke="#a88a10" stroke-width="0.8"/><circle cx="67.2" cy="275.3" r="1.8" fill="#fdf3b0" opacity="0.9"/><rect x="66.5" y="283.0" width="4" height="2.6" rx="0.6" fill="#b8bcc6" stroke="#4a4e58" stroke-width="0.6"/>
<path d="M86.6,274.40000000000003 Q86.6,273.6 87.4,273.6 H92 L93.2,275.40000000000003 H99.8 Q100.6,275.40000000000003 100.6,276.2 V284.6 Q100.6,285.40000000000003 99.8,285.40000000000003 H87.4 Q86.6,285.40000000000003 86.6,284.6 Z" fill="url(#gFold)" stroke="#30343c" stroke-width="1.1" stroke-linejoin="round"/><path d="M86.8,276.0 H92.8" stroke="#30343c" stroke-width="0.9"/>
<polygon points="40.6,297.7 49.2,303.3 40.6,308.90000000000003" fill="#f4f4f4" fill-opacity="0.7" stroke="#383838" stroke-width="1.05" stroke-linejoin="miter"/>
<path d="M63.9,300.8 A4.6,4.6 0 1 1 73.1,300.8 Q72.8,303.8 70.5,305.8 V307.2 H66.5 V305.8 Q64.2,303.8 63.9,300.8 Z" fill="#f6d84a" stroke="#a88a10" stroke-width="0.8"/><circle cx="67.2" cy="299.3" r="1.8" fill="#fdf3b0" opacity="0.9"/><rect x="66.5" y="307.0" width="4" height="2.6" rx="0.6" fill="#b8bcc6" stroke="#4a4e58" stroke-width="0.6"/>
<path d="M86.6,298.40000000000003 Q86.6,297.6 87.4,297.6 H92 L93.2,299.40000000000003 H99.8 Q100.6,299.40000000000003 100.6,300.2 V308.6 Q100.6,309.40000000000003 99.8,309.40000000000003 H87.4 Q86.6,309.40000000000003 86.6,308.6 Z" fill="url(#gFold)" stroke="#30343c" stroke-width="1.1" stroke-linejoin="round"/><path d="M86.8,300.0 H92.8" stroke="#30343c" stroke-width="0.9"/>
<polygon points="40.6,321.7 49.2,327.3 40.6,332.90000000000003" fill="#f4f4f4" fill-opacity="0.7" stroke="#383838" stroke-width="1.05" stroke-linejoin="miter"/>
<path d="M63.9,324.8 A4.6,4.6 0 1 1 73.1,324.8 Q72.8,327.8 70.5,329.8 V331.2 H66.5 V329.8 Q64.2,327.8 63.9,324.8 Z" fill="#f6d84a" stroke="#a88a10" stroke-width="0.8"/><circle cx="67.2" cy="323.3" r="1.8" fill="#fdf3b0" opacity="0.9"/><rect x="66.5" y="331.0" width="4" height="2.6" rx="0.6" fill="#b8bcc6" stroke="#4a4e58" stroke-width="0.6"/>
<path d="M86.6,322.40000000000003 Q86.6,321.6 87.4,321.6 H92 L93.2,323.40000000000003 H99.8 Q100.6,323.40000000000003 100.6,324.2 V332.6 Q100.6,333.40000000000003 99.8,333.40000000000003 H87.4 Q86.6,333.40000000000003 86.6,332.6 Z" fill="url(#gFold)" stroke="#30343c" stroke-width="1.1" stroke-linejoin="round"/><path d="M86.8,324.0 H92.8" stroke="#30343c" stroke-width="0.9"/>
<polygon points="40.6,345.7 49.2,351.3 40.6,356.90000000000003" fill="#f4f4f4" fill-opacity="0.7" stroke="#383838" stroke-width="1.05" stroke-linejoin="miter"/>
<path d="M63.9,348.8 A4.6,4.6 0 1 1 73.1,348.8 Q72.8,351.8 70.5,353.8 V355.2 H66.5 V353.8 Q64.2,351.8 63.9,348.8 Z" fill="#c9dcf7" stroke="#7a8fb8" stroke-width="0.8"/><circle cx="67.2" cy="347.3" r="1.8" fill="#eef4fd" opacity="0.9"/><rect x="66.5" y="355.0" width="4" height="2.6" rx="0.6" fill="#b8bcc6" stroke="#4a4e58" stroke-width="0.6"/>
<path d="M86.6,346.40000000000003 Q86.6,345.6 87.4,345.6 H92 L93.2,347.40000000000003 H99.8 Q100.6,347.40000000000003 100.6,348.2 V356.6 Q100.6,357.40000000000003 99.8,357.40000000000003 H87.4 Q86.6,357.40000000000003 86.6,356.6 Z" fill="url(#gFold)" stroke="#30343c" stroke-width="1.1" stroke-linejoin="round"/><path d="M86.8,348.0 H92.8" stroke="#30343c" stroke-width="0.9"/>
<polygon points="40.6,369.7 49.2,375.3 40.6,380.90000000000003" fill="#f4f4f4" fill-opacity="0.7" stroke="#383838" stroke-width="1.05" stroke-linejoin="miter"/>
<path d="M63.9,372.8 A4.6,4.6 0 1 1 73.1,372.8 Q72.8,375.8 70.5,377.8 V379.2 H66.5 V377.8 Q64.2,375.8 63.9,372.8 Z" fill="#c9dcf7" stroke="#7a8fb8" stroke-width="0.8"/><circle cx="67.2" cy="371.3" r="1.8" fill="#eef4fd" opacity="0.9"/><rect x="66.5" y="379.0" width="4" height="2.6" rx="0.6" fill="#b8bcc6" stroke="#4a4e58" stroke-width="0.6"/>
<path d="M86.6,371.4 Q86.6,370.2 87.8,370.1 L90.6,367.6 H100.6 Q101.6,367.6 101.6,368.6 V379 L97.8,382.8 H87.8 Q86.6,382.8 86.6,381.6 Z" fill="#fbfbfb" stroke="#3a3a3a" stroke-width="0.95" stroke-linejoin="round"/><rect x="87.2" y="370.8" width="10.2" height="11.4" fill="url(#gCube)"/><polygon points="98,370.6 101,368.2 101,378.8 98,382" fill="#dcdde1"/><path d="M87,370.3 H97.7 V382.4 M97.7,370.3 L101.2,367.8" fill="none" stroke="#3a3a3a" stroke-width="0.8"/>
<polygon points="40.6,393.7 49.2,399.3 40.6,404.90000000000003" fill="#f4f4f4" fill-opacity="0.7" stroke="#383838" stroke-width="1.05" stroke-linejoin="miter"/>
<path d="M63.9,396.8 A4.6,4.6 0 1 1 73.1,396.8 Q72.8,399.8 70.5,401.8 V403.2 H66.5 V401.8 Q64.2,399.8 63.9,396.8 Z" fill="#c9dcf7" stroke="#7a8fb8" stroke-width="0.8"/><circle cx="67.2" cy="395.3" r="1.8" fill="#eef4fd" opacity="0.9"/><rect x="66.5" y="403.0" width="4" height="2.6" rx="0.6" fill="#b8bcc6" stroke="#4a4e58" stroke-width="0.6"/>
<path d="M86.6,395.4 Q86.6,394.2 87.8,394.1 L90.6,391.6 H100.6 Q101.6,391.6 101.6,392.6 V403 L97.8,406.8 H87.8 Q86.6,406.8 86.6,405.6 Z" fill="#fbfbfb" stroke="#3a3a3a" stroke-width="0.95" stroke-linejoin="round"/><rect x="87.2" y="394.8" width="10.2" height="11.4" fill="url(#gCube)"/><polygon points="98,394.6 101,392.2 101,402.8 98,406" fill="#dcdde1"/><path d="M87,394.3 H97.7 V406.4 M97.7,394.3 L101.2,391.8" fill="none" stroke="#3a3a3a" stroke-width="0.8"/>
<polygon points="40.6,417.7 49.2,423.3 40.6,428.90000000000003" fill="#f4f4f4" fill-opacity="0.7" stroke="#383838" stroke-width="1.05" stroke-linejoin="miter"/>
<path d="M63.9,420.8 A4.6,4.6 0 1 1 73.1,420.8 Q72.8,423.8 70.5,425.8 V427.2 H66.5 V425.8 Q64.2,423.8 63.9,420.8 Z" fill="#c9dcf7" stroke="#7a8fb8" stroke-width="0.8"/><circle cx="67.2" cy="419.3" r="1.8" fill="#eef4fd" opacity="0.9"/><rect x="66.5" y="427.0" width="4" height="2.6" rx="0.6" fill="#b8bcc6" stroke="#4a4e58" stroke-width="0.6"/>
<path d="M86.6,419.4 Q86.6,418.2 87.8,418.1 L90.6,415.6 H100.6 Q101.6,415.6 101.6,416.6 V427 L97.8,430.8 H87.8 Q86.6,430.8 86.6,429.6 Z" fill="#fbfbfb" stroke="#3a3a3a" stroke-width="0.95" stroke-linejoin="round"/><rect x="87.2" y="418.8" width="10.2" height="11.4" fill="url(#gCube)"/><polygon points="98,418.6 101,416.2 101,426.8 98,430" fill="#dcdde1"/><path d="M87,418.3 H97.7 V430.4 M97.7,418.3 L101.2,415.8" fill="none" stroke="#3a3a3a" stroke-width="0.8"/><path d="M95.4,421.4 H99.6 V422.6 H98.8 V425 L100.8,427.4 H94.2 L96.2,425 V422.6 H95.4 Z" fill="#fbb040" stroke="#e0280a" stroke-width="0.85" stroke-linejoin="round"/><path d="M97.5,427.6 V430.6" stroke="#3a3a3a" stroke-width="0.9"/>
<polygon points="40.6,441.7 49.2,447.3 40.6,452.90000000000003" fill="#f4f4f4" fill-opacity="0.7" stroke="#383838" stroke-width="1.05" stroke-linejoin="miter"/>
<path d="M63.9,444.8 A4.6,4.6 0 1 1 73.1,444.8 Q72.8,447.8 70.5,449.8 V451.2 H66.5 V449.8 Q64.2,447.8 63.9,444.8 Z" fill="#c9dcf7" stroke="#7a8fb8" stroke-width="0.8"/><circle cx="67.2" cy="443.3" r="1.8" fill="#eef4fd" opacity="0.9"/><rect x="66.5" y="451.0" width="4" height="2.6" rx="0.6" fill="#b8bcc6" stroke="#4a4e58" stroke-width="0.6"/>
<path d="M86.6,443.4 Q86.6,442.2 87.8,442.1 L90.6,439.6 H100.6 Q101.6,439.6 101.6,440.6 V451 L97.8,454.8 H87.8 Q86.6,454.8 86.6,453.6 Z" fill="#fbfbfb" stroke="#3a3a3a" stroke-width="0.95" stroke-linejoin="round"/><rect x="87.2" y="442.8" width="10.2" height="11.4" fill="url(#gCube)"/><polygon points="98,442.6 101,440.2 101,450.8 98,454" fill="#dcdde1"/><path d="M87,442.3 H97.7 V454.4 M97.7,442.3 L101.2,439.8" fill="none" stroke="#3a3a3a" stroke-width="0.8"/>
<circle cx="287.6" cy="661.5" r="4.5" fill="#303030"/><path d="M285,661.5 H290 M287.5,659 V664" stroke="#d2d2d2" stroke-width="1.4"/>
<path d="M299.7,657 V666 M301.5,657 V666" stroke="#777" stroke-width="0.8"/>
<circle cx="1114.5" cy="184.5" r="4.5" fill="#303030"/><path d="M1112,184.5 H1117 M1114.5,182 V187" stroke="#d2d2d2" stroke-width="1.4"/>
<path d="M571,654.5 V669.5" stroke="#333" stroke-width="1.1"/><path d="M569.8,656 H572.2 V669 H569.8 Z" fill="#fff" stroke="#333" stroke-width="0.8"/><polygon points="568.2,657 571,653.4 573.8,657" fill="#333"/>
<path d="M573,659.4 C581,660.5 580,664.5 572,665.4 C566,666 563.5,664.5 564.2,662.8" fill="none" stroke="#333" stroke-width="1.1"/><polygon points="563,662.6 567.4,660.4 567,665.6" fill="#333"/>
<polygon points="584.5,660.2 590.1,660.2 587.3,663.8000000000001" fill="#333"/>
<rect x="596.6" y="659.2" width="15" height="10.2" fill="#f2f2f2" stroke="#333" stroke-width="1.1"/><rect x="600" y="662.4" width="8.2" height="4.2" fill="#d4d4d4" stroke="#333" stroke-width="0.9"/><path d="M597.4,659 L601,654.6 L604.6,657.4 L609.4,655.4 L611,659" fill="none" stroke="#333" stroke-width="1"/>
<path d="M626.4,663 L623.2,660 Q622,658.6 623.4,658.2 Q625,658 626.6,660 V655.6 Q626.8,654.4 627.8,654.6 Q628.6,654.8 628.8,656 V654.8 Q629,653.6 630,653.8 Q631,654 631,655 V655.4 Q631.2,654.4 632.2,654.6 Q633.2,654.8 633.2,656 V657.2 Q633.6,656 634.6,656.4 Q635.4,656.8 635.4,658 V663.4 Q635.2,667 633,669.4 H627.6 Q626.4,666 626.4,663 Z" fill="#fff" stroke="#333" stroke-width="0.9" stroke-linejoin="round"/><path d="M628.8,656 V661 M631,655.4 V661 M633.2,657.2 V661.4" stroke="#333" stroke-width="0.7"/>
<circle cx="653.8" cy="661" r="5" fill="#e8f0f6" stroke="#333" stroke-width="1.3"/><path d="M657.6,665 L661,669" stroke="#333" stroke-width="2.4" stroke-linecap="round"/><path d="M659.4,656.6 H664 M661.7,654.4 V658.8 M659.4,660.6 H664" stroke="#333" stroke-width="0.9"/>
<circle cx="680.6" cy="660.6" r="5.8" fill="#f2f2f2" stroke="#333" stroke-width="1.3"/><rect x="677.6" y="657.8" width="6" height="5.6" fill="#ddd" stroke="#555" stroke-width="0.8"/><path d="M685,665 L689,669.4" stroke="#333" stroke-width="2.4" stroke-linecap="round"/>
<polygon points="695.5,660.2 701.1,660.2 698.3,663.8000000000001" fill="#333"/>
<rect x="715.5" y="654.5" width="15" height="12.2" rx="1.2" fill="#f6f6f6" stroke="#333" stroke-width="1"/><rect x="717.6" y="656.6" width="10.8" height="7.8" rx="0.8" fill="#9dbde8" stroke="#27437c" stroke-width="0.9"/><path d="M720.6,667 L719.6,669.4 H726.6 L725.6,667 Z" fill="#f4f4f4" stroke="#444" stroke-width="0.6"/>
<polygon points="733.3,660.2 738.9,660.2 736.0999999999999,663.8000000000001" fill="#333"/>
<rect x="746.5" y="654.5" width="15" height="15" rx="1.2" fill="url(#gGridIc)" stroke="#333" stroke-width="1.1"/>
<rect x="747.60" y="655.60" width="1.6" height="1.6" fill="#fff" fill-opacity="1.00"/>
<rect x="747.60" y="658.44" width="1.6" height="1.6" fill="#fff" fill-opacity="0.92"/>
<rect x="747.60" y="661.28" width="1.6" height="1.6" fill="#fff" fill-opacity="0.84"/>
<rect x="747.60" y="664.12" width="1.6" height="1.6" fill="#fff" fill-opacity="0.76"/>
<rect x="747.60" y="666.96" width="1.6" height="1.6" fill="#fff" fill-opacity="0.68"/>
<rect x="750.44" y="655.60" width="1.6" height="1.6" fill="#fff" fill-opacity="1.00"/>
<rect x="750.44" y="658.44" width="1.6" height="1.6" fill="#fff" fill-opacity="0.92"/>
<rect x="750.44" y="661.28" width="1.6" height="1.6" fill="#fff" fill-opacity="0.84"/>
<rect x="750.44" y="664.12" width="1.6" height="1.6" fill="#fff" fill-opacity="0.76"/>
<rect x="750.44" y="666.96" width="1.6" height="1.6" fill="#fff" fill-opacity="0.68"/>
<rect x="753.28" y="655.60" width="1.6" height="1.6" fill="#fff" fill-opacity="1.00"/>
<rect x="753.28" y="658.44" width="1.6" height="1.6" fill="#fff" fill-opacity="0.92"/>
<rect x="753.28" y="661.28" width="1.6" height="1.6" fill="#fff" fill-opacity="0.84"/>
<rect x="753.28" y="664.12" width="1.6" height="1.6" fill="#fff" fill-opacity="0.76"/>
<rect x="753.28" y="666.96" width="1.6" height="1.6" fill="#fff" fill-opacity="0.68"/>
<rect x="756.12" y="655.60" width="1.6" height="1.6" fill="#fff" fill-opacity="1.00"/>
<rect x="756.12" y="658.44" width="1.6" height="1.6" fill="#fff" fill-opacity="0.92"/>
<rect x="756.12" y="661.28" width="1.6" height="1.6" fill="#fff" fill-opacity="0.84"/>
<rect x="756.12" y="664.12" width="1.6" height="1.6" fill="#fff" fill-opacity="0.76"/>
<rect x="756.12" y="666.96" width="1.6" height="1.6" fill="#fff" fill-opacity="0.68"/>
<rect x="758.96" y="655.60" width="1.6" height="1.6" fill="#fff" fill-opacity="1.00"/>
<rect x="758.96" y="658.44" width="1.6" height="1.6" fill="#fff" fill-opacity="0.92"/>
<rect x="758.96" y="661.28" width="1.6" height="1.6" fill="#fff" fill-opacity="0.84"/>
<rect x="758.96" y="664.12" width="1.6" height="1.6" fill="#fff" fill-opacity="0.76"/>
<rect x="758.96" y="666.96" width="1.6" height="1.6" fill="#fff" fill-opacity="0.68"/>
<polygon points="764.4,660.2 770.0,660.2 767.1999999999999,663.8000000000001" fill="#333"/>
<rect x="777.2" y="655.1" width="14.6" height="12.5" rx="1.2" fill="#2b4a86"/>
<rect x="778.5" y="656.4" width="5.4" height="4.4" fill="#b4cdef"/><rect x="779.7" y="657.5" width="3" height="2.2" fill="none" stroke="#7d9fd2" stroke-width="0.6"/>
<rect x="785.1" y="656.4" width="5.4" height="4.4" fill="#b4cdef"/><rect x="786.3000000000001" y="657.5" width="3" height="2.2" fill="none" stroke="#7d9fd2" stroke-width="0.6"/>
<rect x="778.5" y="662" width="5.4" height="4.4" fill="#b4cdef"/><rect x="779.7" y="663.1" width="3" height="2.2" fill="none" stroke="#7d9fd2" stroke-width="0.6"/>
<rect x="785.1" y="662" width="5.4" height="4.4" fill="#b4cdef"/><rect x="786.3000000000001" y="663.1" width="3" height="2.2" fill="none" stroke="#7d9fd2" stroke-width="0.6"/>
<polygon points="795.2,660.2 800.8000000000001,660.2 798.0,663.8000000000001" fill="#333"/>
<rect x="10.6" y="694.8" width="1.6" height="14.6" fill="#464646"/><polygon points="23.4,694.8 23.4,709.4 12.6,702.1" fill="#464646"/>
<polygon points="45,695.8 45,708.4 35.4,702.1" fill="#464646"/><rect x="46.2" y="698.6" width="1.8" height="7" fill="#464646"/>
<rect x="60" y="698.6" width="1.8" height="7" fill="#464646"/><polygon points="63,695.8 63,708.4 72.6,702.1" fill="#464646"/>
<polygon points="85.8,693.8 85.8,710.2 97.6,702" fill="#464646"/>
<polygon points="111,694.8 111,709.4 121.4,702.1" fill="#464646"/><rect x="121.6" y="694.8" width="1.6" height="14.6" fill="#464646"/>
<rect x="146.6" y="695.4" width="14.8" height="14.8" fill="#f4f6fa" stroke="#111" stroke-width="1.2"/><rect x="147.4" y="705" width="13" height="4.4" fill="#b8cdea"/><path d="M149.4,697.4 V707.4 H156" fill="none" stroke="#111" stroke-width="1.1"/><g transform="translate(151.4,705.4) rotate(-42)"><polygon points="0,0 3,-1.6 3,1.6" fill="#333"/><rect x="3" y="-1.7" width="9.6" height="3.4" fill="#f6c322" stroke="#8a5a10" stroke-width="0.4"/></g>
<rect x="153.1" y="714.8" width="1.8" height="5" fill="#555"/>
<polygon points="172,699 174.6,696 181,696 181,707.4 178.4,710.4 172,710.4" fill="#9db9e0" stroke="#2a3a5a" stroke-width="0.9" stroke-linejoin="round"/><polygon points="178.4,699 181,696 181,707.4 178.4,710.4" fill="#6f90c0"/><rect x="172" y="707.6" width="6.4" height="2.6" fill="#d8dbe0"/><path d="M172,699 H178.4 V710.4" fill="none" stroke="#2a3a5a" stroke-width="0.6"/><path d="M184,710 V697.4" stroke="#222" stroke-width="1"/><polygon points="182,699 184,695 186,699" fill="#222"/>
<rect x="177.1" y="714.8" width="1.8" height="5" fill="#555"/>
<rect x="194.8" y="695.4" width="6.8" height="7.6" rx="2.5" fill="#f6f6f6" stroke="#4a4a4a" stroke-width="0.8"/><path d="M195.6,700.6 Q198.2,702.8 200.8,700.6" fill="none" stroke="#999" stroke-width="0.8"/><rect x="202.8" y="702.6" width="7.2" height="8" rx="2.6" fill="#f6f6f6" stroke="#4a4a4a" stroke-width="0.8"/><path d="M203.6,708.2 Q206.4,710.4 209.2,708.2" fill="none" stroke="#999" stroke-width="0.8"/><path d="M197.4,704 V707.6 H200.4" fill="none" stroke="#1a5ad0" stroke-width="1.3"/><polygon points="199.6,705.2 202.4,707.6 199.6,710" fill="#1a5ad0"/>
<rect x="201.1" y="714.8" width="1.8" height="5" fill="#555"/>
<path d="M220,703 H232 M226,697 V709" stroke="#333" stroke-width="1.1"/><polygon points="218,703 221,700.4 221,705.6" fill="#333"/><polygon points="234,703 231,700.4 231,705.6" fill="#333"/><polygon points="226,695 223.4,698 228.6,698" fill="#333"/><polygon points="226,711 223.4,708 228.6,708" fill="#333"/><rect x="224.3" y="701.3" width="3.4" height="3.4" fill="#eee" stroke="#333" stroke-width="0.7"/>
<rect x="225.1" y="714.8" width="1.8" height="5" fill="#555"/>
<rect x="242.8" y="695.4" width="6.8" height="7.6" rx="2.5" fill="#f6f6f6" stroke="#4a4a4a" stroke-width="0.8"/><path d="M243.6,700.6 Q246.2,702.8 248.8,700.6" fill="none" stroke="#999" stroke-width="0.8"/><rect x="250.8" y="702.6" width="7.2" height="8" rx="2.6" fill="#f6f6f6" stroke="#4a4a4a" stroke-width="0.8"/><path d="M251.6,708.2 Q254.4,710.4 257.2,708.2" fill="none" stroke="#999" stroke-width="0.8"/><path d="M245.4,704 V707.6 H248.4" fill="none" stroke="#1a5ad0" stroke-width="1.3"/><polygon points="247.6,705.2 250.4,707.6 247.6,710" fill="#1a5ad0"/>
<rect x="249.1" y="714.8" width="1.8" height="5" fill="#555"/>
<path d="M268,703 H280 M274,697 V709" stroke="#333" stroke-width="1.1"/><polygon points="266,703 269,700.4 269,705.6" fill="#333"/><polygon points="282,703 279,700.4 279,705.6" fill="#333"/><polygon points="274,695 271.4,698 276.6,698" fill="#333"/><polygon points="274,711 271.4,708 276.6,708" fill="#333"/><rect x="272.3" y="701.3" width="3.4" height="3.4" fill="#eee" stroke="#333" stroke-width="0.7"/>
<rect x="273.1" y="714.8" width="1.8" height="5" fill="#555"/>
<rect x="290.8" y="695.4" width="6.8" height="7.6" rx="2.5" fill="#f6f6f6" stroke="#4a4a4a" stroke-width="0.8"/><path d="M291.6,700.6 Q294.2,702.8 296.8,700.6" fill="none" stroke="#999" stroke-width="0.8"/><rect x="298.8" y="702.6" width="7.2" height="8" rx="2.6" fill="#f6f6f6" stroke="#4a4a4a" stroke-width="0.8"/><path d="M299.6,708.2 Q302.4,710.4 305.2,708.2" fill="none" stroke="#999" stroke-width="0.8"/><path d="M293.4,704 V707.6 H296.4" fill="none" stroke="#1a5ad0" stroke-width="1.3"/><polygon points="295.6,705.2 298.4,707.6 295.6,710" fill="#1a5ad0"/>
<rect x="297.1" y="714.8" width="1.8" height="5" fill="#555"/>
<path d="M316,703 H328 M322,697 V709" stroke="#333" stroke-width="1.1"/><polygon points="314,703 317,700.4 317,705.6" fill="#333"/><polygon points="330,703 327,700.4 327,705.6" fill="#333"/><polygon points="322,695 319.4,698 324.6,698" fill="#333"/><polygon points="322,711 319.4,708 324.6,708" fill="#333"/><rect x="320.3" y="701.3" width="3.4" height="3.4" fill="#eee" stroke="#333" stroke-width="0.7"/>
<rect x="321.1" y="714.8" width="1.8" height="5" fill="#555"/>
<rect x="340.4" y="695.4" width="5" height="4.6" fill="#f2f2f2" stroke="#333" stroke-width="0.8"/><rect x="340.4" y="700" width="5" height="4.6" fill="#f2f2f2" stroke="#333" stroke-width="0.8"/><rect x="343" y="705" width="5" height="5" fill="#cfe2fb" stroke="#1a6ad8" stroke-width="1"/><path d="M350.4,707.6 H354.4" stroke="#111" stroke-width="1"/><polygon points="349,707.6 351.6,705.6 351.6,709.6" fill="#111"/>
<rect x="345.1" y="714.8" width="1.8" height="5" fill="#555"/>
<rect x="364.4" y="695.4" width="5" height="4.6" fill="#f2f2f2" stroke="#333" stroke-width="0.8"/><rect x="364.4" y="700" width="5" height="4.6" fill="#f2f2f2" stroke="#333" stroke-width="0.8"/><rect x="367" y="705" width="5" height="5" fill="#cfe2fb" stroke="#1a6ad8" stroke-width="1"/><path d="M374.4,707.6 H378.4" stroke="#111" stroke-width="1"/><polygon points="373,707.6 375.6,705.6 375.6,709.6" fill="#111"/>
<rect x="369.1" y="714.8" width="1.8" height="5" fill="#555"/>
<rect x="388.4" y="695.4" width="5" height="4.6" fill="#f2f2f2" stroke="#333" stroke-width="0.8"/><rect x="388.4" y="700" width="5" height="4.6" fill="#f2f2f2" stroke="#333" stroke-width="0.8"/><rect x="391" y="705" width="5" height="5" fill="#cfe2fb" stroke="#1a6ad8" stroke-width="1"/><path d="M398.4,707.6 H402.4" stroke="#111" stroke-width="1"/><polygon points="397,707.6 399.6,705.6 399.6,709.6" fill="#111"/>
<rect x="393.1" y="714.8" width="1.8" height="5" fill="#555"/>
<rect x="412.4" y="695.4" width="5" height="4.6" fill="#f2f2f2" stroke="#333" stroke-width="0.8"/><rect x="412.4" y="700" width="5" height="4.6" fill="#f2f2f2" stroke="#333" stroke-width="0.8"/><rect x="415" y="705" width="5" height="5" fill="#cfe2fb" stroke="#1a6ad8" stroke-width="1"/><path d="M422.4,707.6 H426.4" stroke="#111" stroke-width="1"/><polygon points="421,707.6 423.6,705.6 423.6,709.6" fill="#111"/>
<rect x="417.1" y="714.8" width="1.8" height="5" fill="#555"/>
<path d="M437.8,694.2 H446.2 V696.2 L445,697 V700.4 L448.8,704 H435.2 L439,700.4 V697 L437.8,696.2 Z" fill="#ee6a44" stroke="#b23c18" stroke-width="0.6" stroke-linejoin="round"/><path d="M440.4,697 V700.4" stroke="#f9b8a0" stroke-width="1.2"/><path d="M436,703.4 H448" stroke="#d8502a" stroke-width="0.8"/><path d="M442,704.2 V710.2" stroke="#444" stroke-width="1"/>
<rect x="441.1" y="714.8" width="1.8" height="5" fill="#555"/>
<path d="M461.8,694.2 H470.2 V696.2 H469 V699.4 H463 V696.2 H461.8 Z" fill="#ee6a44"/><path d="M463,699.4 H469 V700.4 L472.8,704 H459.2 L463,700.4 Z" fill="#8c8c8c"/><path d="M466,704.2 V710.2" stroke="#444" stroke-width="1"/><path d="M459.6,710.2 L473,694.4" stroke="#e0161a" stroke-width="1.7"/>
<rect x="465.1" y="714.8" width="1.8" height="5" fill="#555"/>
<path d="M485.8,694.2 H494.2 V696.2 L493,697 V700.4 L496.8,704 H483.2 L487,700.4 V697 L485.8,696.2 Z" fill="#ee6a44" stroke="#b23c18" stroke-width="0.6" stroke-linejoin="round"/><path d="M488.4,697 V700.4" stroke="#f9b8a0" stroke-width="1.2"/><path d="M484,703.4 H496" stroke="#d8502a" stroke-width="0.8"/><path d="M490,704.2 V710.2" stroke="#444" stroke-width="1"/>
<rect x="489.1" y="714.8" width="1.8" height="5" fill="#555"/>
<polygon points="506.4,702.2 511.6,696.4 513.8,698.4 513.8,703.6 507.6,709.2 506.4,708" fill="url(#gG)" stroke="#4a4e58" stroke-width="0.8" stroke-linejoin="round"/><path d="M508.4,702.6 L513.6,697.6" stroke="#fff" stroke-width="1"/><polygon points="515.4,699.8 517.6,698.4 521.6,702.8 521.6,709.2 515.4,704.4" fill="#d4d8df" stroke="#4a4e58" stroke-width="0.8" stroke-linejoin="round"/><path d="M514.6,699.4 V702.6" stroke="#f07a10" stroke-width="1.5"/>
<rect x="513.1" y="714.8" width="1.8" height="5" fill="#555"/>
<path d="M532.6,700 L538,695 L544.4,701.4 V704.4 L541.4,707.4" fill="none" stroke="#f5921e" stroke-width="2.2" stroke-linejoin="round" stroke-linecap="round"/><polygon points="532.6,700.6 538,695.6 543.8,701.4 541.2,703.8 538,700.8 535.6,703.2" fill="#fafbfc" stroke="#4a4e58" stroke-width="0.6" stroke-linejoin="round"/><polygon points="532.6,700.6 535.6,703.2 535.6,710.6 532.6,708.6" fill="#e4e6ea" stroke="#4a4e58" stroke-width="0.6" stroke-linejoin="round"/><polygon points="535.6,703.2 538,700.8 538,707.8 535.6,710.6" fill="#9aa0ac" stroke="#4a4e58" stroke-width="0.6" stroke-linejoin="round"/><polygon points="538,700.8 541.2,703.8 541.2,706.6 538,703.6" fill="#b4b9c4" stroke="#4a4e58" stroke-width="0.5" stroke-linejoin="round"/><polygon points="541.2,703.8 543.8,701.4 543.8,704.2 541.2,706.6" fill="#e8eaee" stroke="#4a4e58" stroke-width="0.5" stroke-linejoin="round"/>
<rect x="537.1" y="714.8" width="1.8" height="5" fill="#555"/>
<polygon points="554.4,702.2 559.6,696.4 561.8,698.4 561.8,703.6 555.6,709.2 554.4,708" fill="url(#gG)" stroke="#4a4e58" stroke-width="0.8" stroke-linejoin="round"/><path d="M556.4,702.6 L561.6,697.6" stroke="#fff" stroke-width="1"/><polygon points="563.4,699.8 565.6,698.4 569.6,702.8 569.6,709.2 563.4,704.4" fill="#d4d8df" stroke="#4a4e58" stroke-width="0.8" stroke-linejoin="round"/><path d="M562.6,699.4 V702.6" stroke="#f07a10" stroke-width="1.5"/>
<rect x="561.1" y="714.8" width="1.8" height="5" fill="#555"/>
<path d="M580.6,700 L586,695 L592.4,701.4 V704.4 L589.4,707.4" fill="none" stroke="#f5921e" stroke-width="2.2" stroke-linejoin="round" stroke-linecap="round"/><polygon points="580.6,700.6 586,695.6 591.8,701.4 589.2,703.8 586,700.8 583.6,703.2" fill="#fafbfc" stroke="#4a4e58" stroke-width="0.6" stroke-linejoin="round"/><polygon points="580.6,700.6 583.6,703.2 583.6,710.6 580.6,708.6" fill="#e4e6ea" stroke="#4a4e58" stroke-width="0.6" stroke-linejoin="round"/><polygon points="583.6,703.2 586,700.8 586,707.8 583.6,710.6" fill="#9aa0ac" stroke="#4a4e58" stroke-width="0.6" stroke-linejoin="round"/><polygon points="586,700.8 589.2,703.8 589.2,706.6 586,703.6" fill="#b4b9c4" stroke="#4a4e58" stroke-width="0.5" stroke-linejoin="round"/><polygon points="589.2,703.8 591.8,701.4 591.8,704.2 589.2,706.6" fill="#e8eaee" stroke="#4a4e58" stroke-width="0.5" stroke-linejoin="round"/>
<rect x="585.1" y="714.8" width="1.8" height="5" fill="#555"/>
<polygon points="602.4,702.2 607.6,696.4 609.8,698.4 609.8,703.6 603.6,709.2 602.4,708" fill="url(#gG)" stroke="#4a4e58" stroke-width="0.8" stroke-linejoin="round"/><path d="M604.4,702.6 L609.6,697.6" stroke="#fff" stroke-width="1"/><polygon points="611.4,699.8 613.6,698.4 617.6,702.8 617.6,709.2 611.4,704.4" fill="#d4d8df" stroke="#4a4e58" stroke-width="0.8" stroke-linejoin="round"/><path d="M610.6,699.4 V702.6" stroke="#f07a10" stroke-width="1.5"/>
<rect x="609.1" y="714.8" width="1.8" height="5" fill="#555"/>
<path d="M628.6,700 L634,695 L640.4,701.4 V704.4 L637.4,707.4" fill="none" stroke="#f5921e" stroke-width="2.2" stroke-linejoin="round" stroke-linecap="round"/><polygon points="628.6,700.6 634,695.6 639.8,701.4 637.2,703.8 634,700.8 631.6,703.2" fill="#fafbfc" stroke="#4a4e58" stroke-width="0.6" stroke-linejoin="round"/><polygon points="628.6,700.6 631.6,703.2 631.6,710.6 628.6,708.6" fill="#e4e6ea" stroke="#4a4e58" stroke-width="0.6" stroke-linejoin="round"/><polygon points="631.6,703.2 634,700.8 634,707.8 631.6,710.6" fill="#9aa0ac" stroke="#4a4e58" stroke-width="0.6" stroke-linejoin="round"/><polygon points="634,700.8 637.2,703.8 637.2,706.6 634,703.6" fill="#b4b9c4" stroke="#4a4e58" stroke-width="0.5" stroke-linejoin="round"/><polygon points="637.2,703.8 639.8,701.4 639.8,704.2 637.2,706.6" fill="#e8eaee" stroke="#4a4e58" stroke-width="0.5" stroke-linejoin="round"/>
<rect x="633.1" y="714.8" width="1.8" height="5" fill="#555"/>
<polygon points="650.4,702.2 655.6,696.4 657.8,698.4 657.8,703.6 651.6,709.2 650.4,708" fill="url(#gG)" stroke="#4a4e58" stroke-width="0.8" stroke-linejoin="round"/><path d="M652.4,702.6 L657.6,697.6" stroke="#fff" stroke-width="1"/><polygon points="659.4,699.8 661.6,698.4 665.6,702.8 665.6,709.2 659.4,704.4" fill="#d4d8df" stroke="#4a4e58" stroke-width="0.8" stroke-linejoin="round"/><path d="M658.6,699.4 V702.6" stroke="#f07a10" stroke-width="1.5"/>
<rect x="657.1" y="714.8" width="1.8" height="5" fill="#555"/>
<path d="M676.6,700 L682,695 L688.4,701.4 V704.4 L685.4,707.4" fill="none" stroke="#f5921e" stroke-width="2.2" stroke-linejoin="round" stroke-linecap="round"/><polygon points="676.6,700.6 682,695.6 687.8,701.4 685.2,703.8 682,700.8 679.6,703.2" fill="#fafbfc" stroke="#4a4e58" stroke-width="0.6" stroke-linejoin="round"/><polygon points="676.6,700.6 679.6,703.2 679.6,710.6 676.6,708.6" fill="#e4e6ea" stroke="#4a4e58" stroke-width="0.6" stroke-linejoin="round"/><polygon points="679.6,703.2 682,700.8 682,707.8 679.6,710.6" fill="#9aa0ac" stroke="#4a4e58" stroke-width="0.6" stroke-linejoin="round"/><polygon points="682,700.8 685.2,703.8 685.2,706.6 682,703.6" fill="#b4b9c4" stroke="#4a4e58" stroke-width="0.5" stroke-linejoin="round"/><polygon points="685.2,703.8 687.8,701.4 687.8,704.2 685.2,706.6" fill="#e8eaee" stroke="#4a4e58" stroke-width="0.5" stroke-linejoin="round"/>
<rect x="681.1" y="714.8" width="1.8" height="5" fill="#555"/>
<polygon points="699.6,700 704.4,697.4 704.4,707.6 699.6,710" fill="#dfe8dc" stroke="#2f6a25" stroke-width="0.9" stroke-linejoin="round"/><polygon points="707.6,699.4 712.6,697 712.6,707.4 707.6,710" fill="#6aa052" stroke="#2f6a25" stroke-width="0.9" stroke-linejoin="round"/><polygon points="704.4,697 708,694.6 708,708.6 704.4,711" fill="#f0a070" fill-opacity="0.85" stroke="#b04a18" stroke-width="0.8" stroke-linejoin="round"/>
<rect x="705.1" y="714.8" width="1.8" height="5" fill="#555"/>
<rect x="722.6" y="695.4" width="14.8" height="14.8" fill="#f4f6fa" stroke="#111" stroke-width="1.2"/><rect x="723.4" y="705" width="13" height="4.4" fill="#b8cdea"/><path d="M725.4,697.4 V707.4 H732" fill="none" stroke="#111" stroke-width="1.1"/><g transform="translate(727.4,705.4) rotate(-42)"><polygon points="0,0 3,-1.6 3,1.6" fill="#333"/><rect x="3" y="-1.7" width="9.6" height="3.4" fill="#f6c322" stroke="#8a5a10" stroke-width="0.4"/></g>
<rect x="729.1" y="714.8" width="1.8" height="5" fill="#555"/>
<path d="M749,698.6 Q754,693.6 759.4,698.4" fill="none" stroke="#333" stroke-width="1"/><polygon points="747.6,699.6 748.6,696 751.2,698.8" fill="#333"/><polygon points="760.8,699.4 759.6,695.8 757.2,698.6" fill="#333"/><path d="M747.4,703.4 Q754,699.4 760.8,703.4 V707.4 Q754,712.6 747.4,707.4 Z" fill="#a9c6ea" stroke="#3a5a92" stroke-width="0.9"/><path d="M747.4,703.4 Q754,707.6 760.8,703.4" fill="none" stroke="#3a5a92" stroke-width="0.8"/>
<rect x="753.1" y="714.8" width="1.8" height="5" fill="#555"/>
<path d="M772.6,700 L778,695 L784.4,701.4 V704.4 L781.4,707.4" fill="none" stroke="#f5921e" stroke-width="2.2" stroke-linejoin="round" stroke-linecap="round"/><polygon points="772.6,700.6 778,695.6 783.8,701.4 781.2,703.8 778,700.8 775.6,703.2" fill="#fafbfc" stroke="#4a4e58" stroke-width="0.6" stroke-linejoin="round"/><polygon points="772.6,700.6 775.6,703.2 775.6,710.6 772.6,708.6" fill="#e4e6ea" stroke="#4a4e58" stroke-width="0.6" stroke-linejoin="round"/><polygon points="775.6,703.2 778,700.8 778,707.8 775.6,710.6" fill="#9aa0ac" stroke="#4a4e58" stroke-width="0.6" stroke-linejoin="round"/><polygon points="778,700.8 781.2,703.8 781.2,706.6 778,703.6" fill="#b4b9c4" stroke="#4a4e58" stroke-width="0.5" stroke-linejoin="round"/><polygon points="781.2,703.8 783.8,701.4 783.8,704.2 781.2,706.6" fill="#e8eaee" stroke="#4a4e58" stroke-width="0.5" stroke-linejoin="round"/>
<rect x="777.1" y="714.8" width="1.8" height="5" fill="#555"/>
<rect x="794.6" y="695.4" width="14.8" height="14.8" fill="#f4f6fa" stroke="#111" stroke-width="1.2"/><rect x="795.4" y="705" width="13" height="4.4" fill="#b8cdea"/><path d="M797.4,697.4 V707.4 H804" fill="none" stroke="#111" stroke-width="1.1"/><g transform="translate(799.4,705.4) rotate(-42)"><polygon points="0,0 3,-1.6 3,1.6" fill="#333"/><rect x="3" y="-1.7" width="9.6" height="3.4" fill="#f6c322" stroke="#8a5a10" stroke-width="0.4"/></g>
<rect x="801.1" y="714.8" width="1.8" height="5" fill="#555"/>
<rect x="154" y="719" width="661" height="2" fill="#555"/>
<polygon points="808.6,690.6 820.6,690.6 820.6,692.6 815.6,698 813.8,698 808.6,692.6" fill="#555"/><rect x="813.6" y="697" width="2.2" height="24" fill="#555"/>
<g transform="translate(1348.8,702)"><rect x="-1.7" y="-8" width="3.4" height="4" fill="#444" transform="rotate(0)"/><rect x="-1.7" y="-8" width="3.4" height="4" fill="#444" transform="rotate(45)"/><rect x="-1.7" y="-8" width="3.4" height="4" fill="#444" transform="rotate(90)"/><rect x="-1.7" y="-8" width="3.4" height="4" fill="#444" transform="rotate(135)"/><rect x="-1.7" y="-8" width="3.4" height="4" fill="#444" transform="rotate(180)"/><rect x="-1.7" y="-8" width="3.4" height="4" fill="#444" transform="rotate(225)"/><rect x="-1.7" y="-8" width="3.4" height="4" fill="#444" transform="rotate(270)"/><rect x="-1.7" y="-8" width="3.4" height="4" fill="#444" transform="rotate(315)"/><circle r="5.8" fill="#444"/><circle r="3.4" fill="#ccc"/><circle r="1.7" fill="#444"/></g>
</svg>
</body></html>
